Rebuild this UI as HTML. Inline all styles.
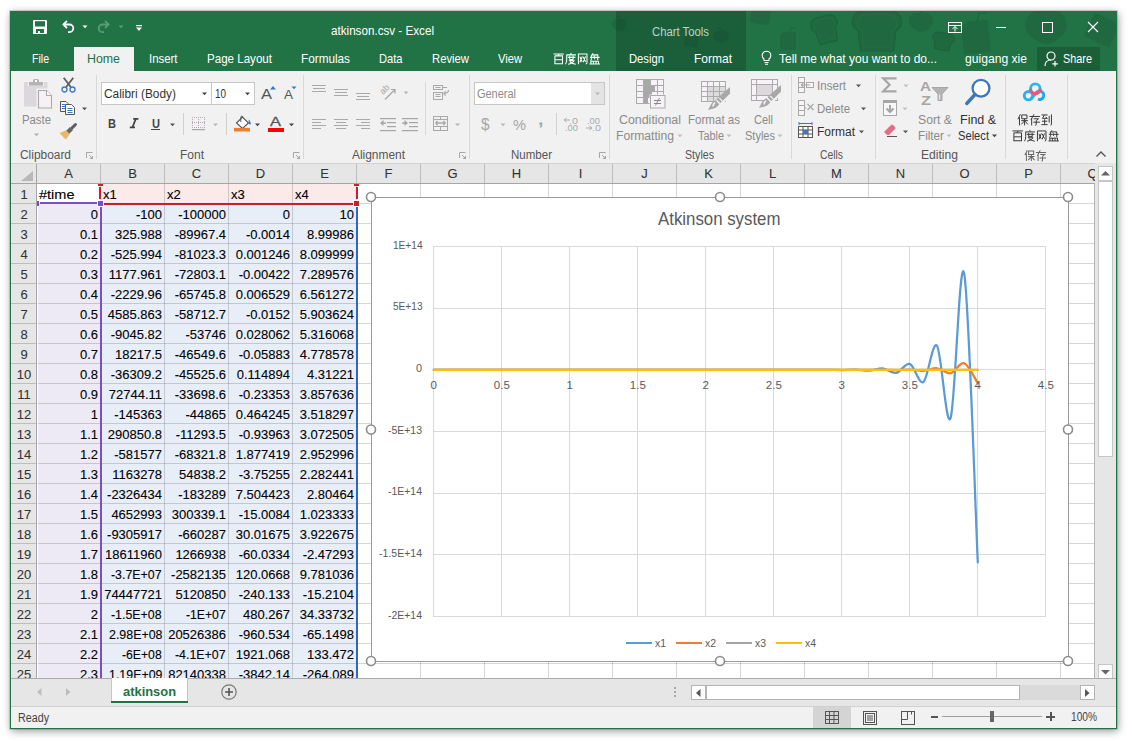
<!DOCTYPE html><html><head><meta charset="utf-8"><style>
html,body{margin:0;padding:0;}
body{width:1132px;height:744px;position:relative;overflow:hidden;background:#fff;font-family:"Liberation Sans",sans-serif;}
div{box-sizing:border-box;}
svg{overflow:visible}
</style></head><body>
<div style="position:absolute;left:10px;top:11px;width:1107px;height:718px;background:#f1f1f1;box-shadow:0 0 0 1px rgba(0,0,0,0.13),1px 2px 8px rgba(0,0,0,0.42);"></div>
<div style="position:absolute;left:10px;top:11px;width:1107px;height:60px;background:#217346;"></div>
<svg style="position:absolute;left:600px;top:11px;overflow:hidden" width="516" height="60" viewBox="0 0 516 60"><g fill="#1f6840"><circle cx="17.1" cy="13.0" r="5.2"/><circle cx="21.9" cy="13.0" r="5.2"/><ellipse cx="19.5" cy="14.8" rx="5.6" ry="5.2"/><path d="M19.5 8.8 q0.7 -3.5 -3.5 -4.2" stroke="#1f6840" stroke-width="1.8" fill="none"/></g><rect x="84" y="24" width="14" height="12" fill="#1f6840" transform="rotate(10 91 30)"/><g fill="#1f6840"><circle cx="118.5" cy="25.0" r="5.2"/><circle cx="123.5" cy="25.0" r="5.2"/><ellipse cx="121.0" cy="26.8" rx="5.6" ry="5.2"/><path d="M121.0 20.8 q0.7 -3.5 -3.5 -4.2" stroke="#1f6840" stroke-width="1.8" fill="none"/></g><rect x="151" y="-2" width="19" height="15" rx="3" fill="#1f6840" transform="rotate(8 160 5)"/><g transform="translate(180 17) rotate(0 8.0 11.0)" fill="#1f6840"><path d="M0 6.6l4.0 -2.6h12.0v18.0h-16.0z"/><path d="M9.6 4.4l1.6 -4.4h4.8" stroke="#1f6840" stroke-width="1.5" fill="none"/></g><g transform="translate(212 5) rotate(-15 13.5 13.5)"><path d="M4.6 27.0 L3.2 13.5 C-2.2 10.8 -0.5 0 8.1 0 L18.9 0 C27.5 0 29.2 10.8 23.8 13.5 L22.4 27.0 Z" fill="#1f6840" stroke="#1d633c" stroke-width="1.2"/><path d="M4.6 27.0 L3.2 13.5 C-2.2 10.8 -0.5 0 8.1 0 L18.9 0 C27.5 0 29.2 10.8 23.8 13.5 L22.4 27.0 Z" fill="none" stroke="#226f44" stroke-width="1.5" transform="translate(2.7 2.7) scale(0.8)"/></g><g transform="translate(252 -1) rotate(0 25.0 20.5)"><path d="M8.5 41.0 L6.0 20.5 C-4.0 16.4 -1.0 0 15.0 0 L35.0 0 C51.0 0 54.0 16.4 44.0 20.5 L41.5 41.0 Z" fill="#1f6840" stroke="#1d633c" stroke-width="1.2"/><path d="M8.5 41.0 L6.0 20.5 C-4.0 16.4 -1.0 0 15.0 0 L35.0 0 C51.0 0 54.0 16.4 44.0 20.5 L41.5 41.0 Z" fill="none" stroke="#226f44" stroke-width="1.5" transform="translate(5.0 4.1) scale(0.8)"/></g><g fill="#1f6840"><circle cx="317.1" cy="10.0" r="8.2"/><circle cx="324.9" cy="10.0" r="8.2"/><ellipse cx="321.0" cy="12.8" rx="8.8" ry="8.2"/><path d="M321.0 3.4 q1.1 -5.5 -5.5 -6.6" stroke="#1f6840" stroke-width="2.8" fill="none"/></g><g transform="translate(332 22) rotate(10 11.0 8.5)"><path d="M3.7 17.0 L2.6 8.5 C-1.8 6.8 -0.4 0 6.6 0 L15.4 0 C22.4 0 23.8 6.8 19.4 8.5 L18.3 17.0 Z" fill="#1f6840" stroke="#1d633c" stroke-width="1.2"/></g><g transform="translate(362 3) rotate(-6 13.5 19.5)" fill="#1f6840"><path d="M0 11.7l6.8 -4.7h20.2v32.0h-27.0z"/><path d="M16.2 7.8l2.7 -7.8h8.1" stroke="#1f6840" stroke-width="1.5" fill="none"/></g><g fill="#1f6840"><circle cx="439.4" cy="14.0" r="14.2"/><circle cx="452.6" cy="14.0" r="14.2"/><ellipse cx="446.0" cy="18.8" rx="15.2" ry="14.2"/><path d="M446.0 2.6 q1.9 -9.5 -9.5 -11.4" stroke="#1f6840" stroke-width="4.8" fill="none"/></g><rect x="488" y="6" width="28" height="26" fill="#1f6840" transform="rotate(25 502 19)"/></svg>
<div style="position:absolute;left:616px;top:11px;width:130px;height:60px;background:rgba(15,60,35,0.36);"></div>
<svg style="position:absolute;left:33px;top:20px;" width="14" height="14" viewBox="0 0 14 14"><rect x="0" y="0" width="14" height="14" rx="0.8" fill="#fff"/>
      <rect x="2" y="1.2" width="10" height="5.3" fill="#217346"/><rect x="3" y="9" width="8" height="4" fill="#217346"/>
      <rect x="5" y="11" width="2" height="2" fill="#fff"/></svg>
<svg style="position:absolute;left:60px;top:19px;" width="16" height="16" viewBox="0 0 16 16"><path d="M7 1.8l-3.6 3.7 3.6 3.7" fill="none" stroke="#fff" stroke-width="1.8"/><path d="M3.5 5.5h6a3.8 3.8 0 0 1 0 7.6h-1.5" fill="none" stroke="#fff" stroke-width="1.8"/></svg>
<svg style="position:absolute;left:82px;top:25px;" width="6" height="4" viewBox="0 0 6 4"><path d="M0.5 0.5h5l-2.5 2.8z" fill="#fff"/></svg>
<svg style="position:absolute;left:96px;top:19px;" width="16" height="16" viewBox="0 0 16 16"><path d="M9 1.8l3.6 3.7-3.6 3.7" fill="none" stroke="#5d9c78" stroke-width="1.8"/><path d="M12.5 5.5h-6a3.8 3.8 0 0 0 0 7.6h1.5" fill="none" stroke="#5d9c78" stroke-width="1.8"/></svg>
<svg style="position:absolute;left:118px;top:25px;" width="6" height="4" viewBox="0 0 6 4"><path d="M0.5 0.5h5l-2.5 2.8z" fill="#5d9c78"/></svg>
<svg style="position:absolute;left:136px;top:25px;" width="6" height="7" viewBox="0 0 6 7"><rect x="0" y="0" width="6" height="1.2" fill="#fff"/><path d="M0 2.5h6l-3 3.5z" fill="#fff"/></svg>
<div style="position:absolute;left:331.00px;top:23.03px;font-size:13px;line-height:normal;white-space:nowrap;color:#fff;transform:scaleX(0.8966);transform-origin:0 0;">atkinson.csv - Excel</div>
<div style="position:absolute;left:652.00px;top:24.64px;font-size:12px;line-height:normal;white-space:nowrap;color:#bcd6c4;transform:scaleX(0.9425);transform-origin:0 0;">Chart Tools</div>
<svg style="position:absolute;left:948px;top:22px;" width="14" height="11" viewBox="0 0 14 11"><g fill="none" stroke="#fff" stroke-width="1"><rect x="0.5" y="0.5" width="13" height="10"/><path d="M0.5 3.5h13M7 9.5v-5M4.5 7l2.5-2.5 2.5 2.5"/></g></svg>
<svg style="position:absolute;left:996px;top:27px;" width="11" height="2" viewBox="0 0 11 2"><rect x="0" y="0" width="10" height="1" fill="#fff"/></svg>
<svg style="position:absolute;left:1042px;top:22px;" width="11" height="11" viewBox="0 0 11 11"><rect x="0.5" y="0.5" width="10" height="10" fill="none" stroke="#fff" stroke-width="1"/></svg>
<svg style="position:absolute;left:1088px;top:22px;" width="10" height="10" viewBox="0 0 10 10"><path d="M0 0l10 10M10 0l-10 10" stroke="#fff" stroke-width="1.1"/></svg>
<div style="position:absolute;left:74px;top:47px;width:60px;height:24px;background:#f1f1f1;"></div>
<div style="position:absolute;left:32.00px;top:51.23px;font-size:13px;line-height:normal;white-space:nowrap;color:#fff;transform:scaleX(0.8115);transform-origin:0 0;">File</div>
<div style="position:absolute;left:87.00px;top:51.23px;font-size:13px;line-height:normal;white-space:nowrap;color:#217346;transform:scaleX(0.9516);transform-origin:0 0;">Home</div>
<div style="position:absolute;left:149.00px;top:51.23px;font-size:13px;line-height:normal;white-space:nowrap;color:#fff;transform:scaleX(0.8766);transform-origin:0 0;">Insert</div>
<div style="position:absolute;left:207.00px;top:51.23px;font-size:13px;line-height:normal;white-space:nowrap;color:#fff;transform:scaleX(0.8903);transform-origin:0 0;">Page Layout</div>
<div style="position:absolute;left:301.00px;top:51.23px;font-size:13px;line-height:normal;white-space:nowrap;color:#fff;transform:scaleX(0.9044);transform-origin:0 0;">Formulas</div>
<div style="position:absolute;left:379.00px;top:51.23px;font-size:13px;line-height:normal;white-space:nowrap;color:#fff;transform:scaleX(0.8558);transform-origin:0 0;">Data</div>
<div style="position:absolute;left:432.00px;top:51.23px;font-size:13px;line-height:normal;white-space:nowrap;color:#fff;transform:scaleX(0.8680);transform-origin:0 0;">Review</div>
<div style="position:absolute;left:498.00px;top:51.23px;font-size:13px;line-height:normal;white-space:nowrap;color:#fff;transform:scaleX(0.8589);transform-origin:0 0;">View</div>
<div style="position:absolute;left:629.00px;top:51.23px;font-size:13px;line-height:normal;white-space:nowrap;color:#fff;transform:scaleX(0.8649);transform-origin:0 0;">Design</div>
<div style="position:absolute;left:694.00px;top:51.23px;font-size:13px;line-height:normal;white-space:nowrap;color:#fff;transform:scaleX(0.9229);transform-origin:0 0;">Format</div>
<svg style="position:absolute;left:762px;top:51px;" width="9" height="14" viewBox="0 0 9 14"><g fill="none" stroke="#fff" stroke-width="1.1"><path d="M2 9.5v-1.5c-1.3-1-1.8-2.3-1.8-3.5a4.3 4.3 0 0 1 8.6 0c0 1.2-.5 2.5-1.8 3.5v1.5z"/><path d="M2.5 11.5h4M3 13.3h3"/></g></svg>
<div style="position:absolute;left:779.00px;top:51.23px;font-size:13px;line-height:normal;white-space:nowrap;color:#fff;transform:scaleX(0.9226);transform-origin:0 0;">Tell me what you want to do...</div>
<div style="position:absolute;left:965.00px;top:51.23px;font-size:13px;line-height:normal;white-space:nowrap;color:#fff;transform:scaleX(0.9323);transform-origin:0 0;">guigang xie</div>
<div style="position:absolute;left:1037px;top:47px;width:63px;height:24px;background:#1b5e37;"></div>
<svg style="position:absolute;left:1044px;top:51px;" width="16" height="16" viewBox="0 0 16 16"><g fill="none" stroke="#fff" stroke-width="1.2"><circle cx="7" cy="5" r="4"/><path d="M1 15c0-4 2.5-6 6-6"/><path d="M11 10v5.5M8.3 12.8h5.5"/></g></svg>
<div style="position:absolute;left:1063.00px;top:51.23px;font-size:13px;line-height:normal;white-space:nowrap;color:#fff;transform:scaleX(0.8359);transform-origin:0 0;">Share</div>
<div style="position:absolute;left:11px;top:163px;width:1105px;height:1px;background:#d2d2d2;"></div>
<div style="position:absolute;left:96px;top:75px;width:1px;height:84px;background:#d8d8d8;"></div>
<div style="position:absolute;left:303px;top:75px;width:1px;height:84px;background:#d8d8d8;"></div>
<div style="position:absolute;left:469px;top:75px;width:1px;height:84px;background:#d8d8d8;"></div>
<div style="position:absolute;left:609px;top:75px;width:1px;height:84px;background:#d8d8d8;"></div>
<div style="position:absolute;left:791px;top:75px;width:1px;height:84px;background:#d8d8d8;"></div>
<div style="position:absolute;left:875px;top:75px;width:1px;height:84px;background:#d8d8d8;"></div>
<div style="position:absolute;left:1005px;top:75px;width:1px;height:84px;background:#d8d8d8;"></div>
<div style="position:absolute;left:1067px;top:75px;width:1px;height:84px;background:#d8d8d8;"></div>
<div style="position:absolute;left:20.00px;top:148.14px;font-size:12px;line-height:normal;white-space:nowrap;color:#555;transform:scaleX(0.9929);transform-origin:0 0;">Clipboard</div>
<div style="position:absolute;left:180.00px;top:148.14px;font-size:12px;line-height:normal;white-space:nowrap;color:#555;">Font</div>
<div style="position:absolute;left:352.00px;top:148.14px;font-size:12px;line-height:normal;white-space:nowrap;color:#555;transform:scaleX(0.9932);transform-origin:0 0;">Alignment</div>
<div style="position:absolute;left:511.00px;top:148.14px;font-size:12px;line-height:normal;white-space:nowrap;color:#555;transform:scaleX(0.9606);transform-origin:0 0;">Number</div>
<div style="position:absolute;left:685.00px;top:148.14px;font-size:12px;line-height:normal;white-space:nowrap;color:#555;transform:scaleX(0.8874);transform-origin:0 0;">Styles</div>
<div style="position:absolute;left:820.00px;top:148.14px;font-size:12px;line-height:normal;white-space:nowrap;color:#555;transform:scaleX(0.8623);transform-origin:0 0;">Cells</div>
<div style="position:absolute;left:921.00px;top:148.14px;font-size:12px;line-height:normal;white-space:nowrap;color:#555;transform:scaleX(1.0084);transform-origin:0 0;">Editing</div>
<svg style="position:absolute;left:85.5px;top:152px;" width="8" height="8" viewBox="0 0 8 8"><path d="M0.5 6v-5.5h6" fill="none" stroke="#a6a6a6" stroke-width="1"/><path d="M3 3l3 3" stroke="#a6a6a6" stroke-width="1"/><path d="M7 3.5v3.5h-3.5z" fill="#a6a6a6"/></svg>
<svg style="position:absolute;left:292.5px;top:152px;" width="8" height="8" viewBox="0 0 8 8"><path d="M0.5 6v-5.5h6" fill="none" stroke="#a6a6a6" stroke-width="1"/><path d="M3 3l3 3" stroke="#a6a6a6" stroke-width="1"/><path d="M7 3.5v3.5h-3.5z" fill="#a6a6a6"/></svg>
<svg style="position:absolute;left:458.5px;top:152px;" width="8" height="8" viewBox="0 0 8 8"><path d="M0.5 6v-5.5h6" fill="none" stroke="#a6a6a6" stroke-width="1"/><path d="M3 3l3 3" stroke="#a6a6a6" stroke-width="1"/><path d="M7 3.5v3.5h-3.5z" fill="#a6a6a6"/></svg>
<svg style="position:absolute;left:598.5px;top:152px;" width="8" height="8" viewBox="0 0 8 8"><path d="M0.5 6v-5.5h6" fill="none" stroke="#a6a6a6" stroke-width="1"/><path d="M3 3l3 3" stroke="#a6a6a6" stroke-width="1"/><path d="M7 3.5v3.5h-3.5z" fill="#a6a6a6"/></svg>
<svg style="position:absolute;left:22px;top:77px;" width="32" height="34" viewBox="0 0 32 34"><rect x="2" y="5" width="23.5" height="24.5" rx="1" fill="#dbd7db"/>
      <rect x="6" y="4.5" width="16" height="4.5" fill="#f1f1f1"/>
      <rect x="7" y="5" width="14" height="3.6" fill="#b4b4b4"/>
      <rect x="11" y="2" width="6" height="4" rx="1.5" fill="#b4b4b4"/><rect x="13" y="3" width="2" height="2" fill="#fff"/>
      <path d="M15.5 12.5h9.5l5.5 5.5v13.5h-15z" fill="#f1f1f1" stroke="#f1f1f1" stroke-width="2"/>
      <path d="M16.5 13.5h8l5 5v12.5h-13z" fill="#f5f1f5" stroke="#aaaaaa" stroke-width="1.1"/>
      <path d="M24.5 13.5v5h5" fill="#fff" stroke="#aaaaaa" stroke-width="1.1"/></svg>
<div style="position:absolute;left:22.00px;top:113.14px;font-size:12px;line-height:normal;white-space:nowrap;color:#8a8a8a;transform:scaleX(0.9450);transform-origin:0 0;">Paste</div>
<svg style="position:absolute;left:33px;top:133px;" width="7" height="4" viewBox="0 0 7 4"><path d="M1 0.5h5l-2.5 2.8z" fill="#b0b0b0"/></svg>
<svg style="position:absolute;left:61px;top:77px;" width="15" height="16" viewBox="0 0 15 16"><path d="M5.2 10L12.3 0.8M9.8 10L2.7 0.8" stroke="#5d5d5d" stroke-width="1.8" fill="none"/>
      <g fill="none" stroke="#3b78c2" stroke-width="1.3"><circle cx="3.5" cy="12.5" r="2.5"/><circle cx="11.5" cy="12.5" r="2.5"/></g></svg>
<svg style="position:absolute;left:60px;top:101px;" width="15" height="14" viewBox="0 0 15 14"><path d="M0.5 0.5h5.5l2 2v8h-7.5z" fill="#f4f4f4" stroke="#555" stroke-width="1"/>
      <path d="M2 3.5h3M2 5.5h3M2 7.5h3" stroke="#3b78c2" stroke-width="1"/>
      <path d="M5.5 3.5h6l3 3v7h-9z" fill="#fff" stroke="#555" stroke-width="1"/>
      <path d="M7.5 7.5h5M7.5 9.5h5M7.5 11.5h5" stroke="#3b78c2" stroke-width="1"/></svg>
<svg style="position:absolute;left:81px;top:107px;" width="7" height="4" viewBox="0 0 7 4"><path d="M1 0.5h5l-2.5 2.8z" fill="#555"/></svg>
<svg style="position:absolute;left:59px;top:123px;" width="18" height="18" viewBox="0 0 18 18"><path d="M16.5 1.5L13 5" stroke="#5d5d5d" stroke-width="3" stroke-linecap="round"/>
      <path d="M12.5 5.5L8.5 9.5" stroke="#666" stroke-width="4.4"/>
      <path d="M7 7.2L10.8 11L6.8 16.5L0.5 10.2Z" fill="#e8b86a"/></svg>
<div style="position:absolute;left:101px;top:82px;width:111px;height:23px;background:#fff;border:1px solid #c6c6c6;"></div>
<div style="position:absolute;left:211px;top:82px;width:44px;height:23px;background:#fff;border:1px solid #c6c6c6;"></div>
<div style="position:absolute;left:104.00px;top:86.69px;font-size:12.5px;line-height:normal;white-space:nowrap;color:#333;transform:scaleX(0.9509);transform-origin:0 0;">Calibri (Body)</div>
<div style="position:absolute;left:215.00px;top:86.69px;font-size:12.5px;line-height:normal;white-space:nowrap;color:#333;transform:scaleX(0.7911);transform-origin:0 0;">10</div>
<svg style="position:absolute;left:201px;top:92px;" width="7" height="4" viewBox="0 0 7 4"><path d="M1 0.5h5l-2.5 2.8z" fill="#444"/></svg>
<svg style="position:absolute;left:244px;top:92px;" width="7" height="4" viewBox="0 0 7 4"><path d="M1 0.5h5l-2.5 2.8z" fill="#444"/></svg>
<div style="position:absolute;left:261.00px;top:85.42px;font-size:15px;line-height:normal;white-space:nowrap;color:#555;transform:scaleX(1.0994);transform-origin:0 0;">A</div>
<svg style="position:absolute;left:270px;top:86px;" width="6" height="4" viewBox="0 0 6 4"><path d="M0 3.5l3-3.5 3 3.5z" fill="#3b78c2"/></svg>
<div style="position:absolute;left:284.00px;top:88.14px;font-size:12px;line-height:normal;white-space:nowrap;color:#555;transform:scaleX(1.1244);transform-origin:0 0;">A</div>
<svg style="position:absolute;left:291px;top:86px;" width="6" height="4" viewBox="0 0 6 4"><path d="M0.5 0.5h5l-2.5 2.8z" fill="#3b78c2"/></svg>
<div style="position:absolute;left:107.50px;top:116.23px;font-size:13px;line-height:normal;white-space:nowrap;color:#444;font-weight:bold;transform:scaleX(0.8521);transform-origin:0 0;">B</div>
<svg style="position:absolute;left:128.5px;top:118px;" width="10" height="11" viewBox="0 0 10 11"><path d="M4.2 0.9h5.2M0.8 9.4h5.2M6.8 0.9l-3.4 8.5" stroke="#444" stroke-width="1.7" fill="none"/></svg>
<div style="position:absolute;left:151.50px;top:116.99px;font-size:12.5px;line-height:normal;white-space:nowrap;color:#444;font-weight:bold;transform:scaleX(0.8862);transform-origin:0 0;">U</div>
<div style="position:absolute;left:151px;top:129px;width:9px;height:1.4px;background:#444;"></div>
<svg style="position:absolute;left:169px;top:123px;" width="7" height="4" viewBox="0 0 7 4"><path d="M1 0.5h5l-2.5 2.8z" fill="#555"/></svg>
<div style="position:absolute;left:183px;top:113px;width:1px;height:22px;background:#d0d0d0;"></div>
<svg style="position:absolute;left:192px;top:117px;" width="14" height="14" viewBox="0 0 14 14"><rect x="0" y="0" width="1" height="1" fill="#b9a9b9"/><rect x="0" y="5" width="1" height="1" fill="#b9a9b9"/><rect x="0" y="10" width="1" height="1" fill="#b9a9b9"/><rect x="2" y="0" width="1" height="1" fill="#b9a9b9"/><rect x="2" y="5" width="1" height="1" fill="#b9a9b9"/><rect x="2" y="10" width="1" height="1" fill="#b9a9b9"/><rect x="4" y="0" width="1" height="1" fill="#b9a9b9"/><rect x="4" y="5" width="1" height="1" fill="#b9a9b9"/><rect x="4" y="10" width="1" height="1" fill="#b9a9b9"/><rect x="6" y="0" width="1" height="1" fill="#b9a9b9"/><rect x="6" y="5" width="1" height="1" fill="#b9a9b9"/><rect x="6" y="10" width="1" height="1" fill="#b9a9b9"/><rect x="8" y="0" width="1" height="1" fill="#b9a9b9"/><rect x="8" y="5" width="1" height="1" fill="#b9a9b9"/><rect x="8" y="10" width="1" height="1" fill="#b9a9b9"/><rect x="10" y="0" width="1" height="1" fill="#b9a9b9"/><rect x="10" y="5" width="1" height="1" fill="#b9a9b9"/><rect x="10" y="10" width="1" height="1" fill="#b9a9b9"/><rect x="12" y="0" width="1" height="1" fill="#b9a9b9"/><rect x="12" y="5" width="1" height="1" fill="#b9a9b9"/><rect x="12" y="10" width="1" height="1" fill="#b9a9b9"/><rect x="0" y="2" width="1" height="1" fill="#b9a9b9"/><rect x="0" y="4" width="1" height="1" fill="#b9a9b9"/><rect x="0" y="6" width="1" height="1" fill="#b9a9b9"/><rect x="0" y="8" width="1" height="1" fill="#b9a9b9"/><rect x="6" y="2" width="1" height="1" fill="#b9a9b9"/><rect x="6" y="4" width="1" height="1" fill="#b9a9b9"/><rect x="6" y="6" width="1" height="1" fill="#b9a9b9"/><rect x="6" y="8" width="1" height="1" fill="#b9a9b9"/><rect x="12" y="2" width="1" height="1" fill="#b9a9b9"/><rect x="12" y="4" width="1" height="1" fill="#b9a9b9"/><rect x="12" y="6" width="1" height="1" fill="#b9a9b9"/><rect x="12" y="8" width="1" height="1" fill="#b9a9b9"/><rect x="0" y="12" width="13" height="1.2" fill="#a6a6a6"/></svg>
<svg style="position:absolute;left:212px;top:123px;" width="7" height="4" viewBox="0 0 7 4"><path d="M1 0.5h5l-2.5 2.8z" fill="#b8b8b8"/></svg>
<div style="position:absolute;left:226px;top:113px;width:1px;height:22px;background:#d0d0d0;"></div>
<svg style="position:absolute;left:234px;top:114px;" width="18" height="18" viewBox="0 0 18 18"><path d="M2.5 9l6-6 6 6-6 5.5z" fill="#fff" stroke="#555" stroke-width="1.1"/>
      <path d="M6.8 8V3.2a1 1 0 0 1 2 0" fill="none" stroke="#555" stroke-width="1"/>
      <path d="M14.5 5.5c1.6 1 2.6 3 2.2 5.2l-1.7 -0.6z" fill="#3b78c2"/>
      <rect x="0" y="13.9" width="16" height="3.6" fill="#ed7d31"/></svg>
<svg style="position:absolute;left:254px;top:123px;" width="7" height="4" viewBox="0 0 7 4"><path d="M1 0.5h5l-2.5 2.8z" fill="#444"/></svg>
<div style="position:absolute;left:270.00px;top:114.38px;font-size:13.5px;line-height:normal;white-space:nowrap;color:#555;transform:scaleX(1.2216);transform-origin:0 0;-webkit-text-stroke:0.3px #555;">A</div>
<div style="position:absolute;left:268px;top:128px;width:16px;height:4px;background:#ff0000;"></div>
<svg style="position:absolute;left:288px;top:123px;" width="7" height="4" viewBox="0 0 7 4"><path d="M1 0.5h5l-2.5 2.8z" fill="#444"/></svg>
<svg style="position:absolute;left:312px;top:85px;" width="16" height="12" viewBox="0 0 16 12"><rect x="0" y="0" width="14" height="1" fill="#a9a9a9"/><rect x="1" y="3" width="12" height="1" fill="#a9a9a9"/><rect x="0" y="6" width="14" height="1" fill="#a9a9a9"/></svg>
<svg style="position:absolute;left:334px;top:89px;" width="16" height="12" viewBox="0 0 16 12"><rect x="0" y="0" width="14" height="1" fill="#a9a9a9"/><rect x="1" y="3" width="12" height="1" fill="#a9a9a9"/><rect x="0" y="6" width="14" height="1" fill="#a9a9a9"/></svg>
<svg style="position:absolute;left:356px;top:93px;" width="16" height="12" viewBox="0 0 16 12"><rect x="0" y="0" width="14" height="1" fill="#a9a9a9"/><rect x="1" y="3" width="12" height="1" fill="#a9a9a9"/><rect x="0" y="6" width="14" height="1" fill="#a9a9a9"/></svg>
<svg style="position:absolute;left:380px;top:84px;" width="17" height="17" viewBox="0 0 17 17"><text x="0" y="0" font-size="9" font-family="Liberation Sans" fill="#a6a6a6" transform="translate(3 11) rotate(-45)">ab</text><g fill="none" stroke="#a6a6a6" stroke-width="1.2"><path d="M5 15.5l10-10M11 5.5h4v4"/></g></svg>
<svg style="position:absolute;left:403px;top:91px;" width="6" height="4" viewBox="0 0 6 4"><path d="M0.5 0.5h5l-2.5 2.8z" fill="#b8b8b8"/></svg>
<svg style="position:absolute;left:312px;top:119px;" width="16" height="12" viewBox="0 0 16 12"><rect x="0" y="0" width="14" height="1" fill="#a9a9a9"/><rect x="0" y="3" width="9" height="1" fill="#a9a9a9"/><rect x="0" y="6" width="14" height="1" fill="#a9a9a9"/><rect x="0" y="9" width="9" height="1" fill="#a9a9a9"/></svg>
<svg style="position:absolute;left:334px;top:119px;" width="16" height="12" viewBox="0 0 16 12"><rect x="0" y="0" width="14" height="1" fill="#a9a9a9"/><rect x="2" y="3" width="10" height="1" fill="#a9a9a9"/><rect x="0" y="6" width="14" height="1" fill="#a9a9a9"/><rect x="2" y="9" width="10" height="1" fill="#a9a9a9"/></svg>
<svg style="position:absolute;left:356px;top:119px;" width="16" height="12" viewBox="0 0 16 12"><rect x="0" y="0" width="14" height="1" fill="#a9a9a9"/><rect x="5" y="3" width="9" height="1" fill="#a9a9a9"/><rect x="0" y="6" width="14" height="1" fill="#a9a9a9"/><rect x="5" y="9" width="9" height="1" fill="#a9a9a9"/></svg>
<svg style="position:absolute;left:380px;top:118px;" width="17" height="13" viewBox="0 0 17 13"><g fill="#a6a6a6"><rect x="0" y="0" width="16" height="1.2"/><rect x="7" y="4" width="9" height="1.2"/><rect x="7" y="8" width="9" height="1.2"/><rect x="0" y="12" width="16" height="1.2"/><path d="M0 5l3.5-3v6z"/><rect x="3" y="4.4" width="3" height="1.4"/></g></svg>
<svg style="position:absolute;left:402px;top:118px;" width="17" height="13" viewBox="0 0 17 13"><g fill="#a6a6a6"><rect x="0" y="0" width="16" height="1.2"/><rect x="7" y="4" width="9" height="1.2"/><rect x="7" y="8" width="9" height="1.2"/><rect x="0" y="12" width="16" height="1.2"/><path d="M6 5l-3.5-3v6z"/><rect x="0" y="4.4" width="3" height="1.4"/></g></svg>
<div style="position:absolute;left:425px;top:82px;width:1px;height:53px;background:#d8d8d8;"></div>
<svg style="position:absolute;left:432px;top:84px;" width="18" height="17" viewBox="0 0 18 17"><g fill="none" stroke="#a9a9a9" stroke-width="1"><rect x="1.5" y="1.5" width="9" height="4"/><path d="M10.5 3.5h4.5M3.5 3.5h5"/><rect x="1.5" y="8.5" width="9" height="7"/><path d="M3.5 10.5h5M3.5 12.5h5"/></g><path d="M16.5 6c0 2.5-1.5 3.5-5 3.5M11.5 9.5l2.2-2.2M11.5 9.5l2.2 2.2" stroke="#a9a9a9" stroke-width="1.2" fill="none"/></svg>
<svg style="position:absolute;left:432px;top:115px;" width="18" height="17" viewBox="0 0 18 17"><g fill="none" stroke="#a9a9a9" stroke-width="1"><rect x="1.5" y="1.5" width="14" height="14"/><path d="M1.5 4.5h14M1.5 11.5h14M8.5 1.5v3M8.5 11.5v4"/></g><path d="M3.5 8h10M3.5 8l2.2-2M3.5 8l2.2 2M13.5 8l-2.2-2M13.5 8l-2.2 2" stroke="#a9a9a9" stroke-width="1.3" fill="none"/></svg>
<svg style="position:absolute;left:454px;top:123px;" width="7" height="4" viewBox="0 0 7 4"><path d="M1 0.5h5l-2.5 2.8z" fill="#b8b8b8"/></svg>
<div style="position:absolute;left:474px;top:82px;width:131px;height:23px;background:#fff;border:1px solid #c6c6c6;"></div>
<div style="position:absolute;left:591px;top:83px;width:13px;height:21px;background:#e4e4e4;"></div>
<div style="position:absolute;left:477.00px;top:86.69px;font-size:12.5px;line-height:normal;white-space:nowrap;color:#8a8a8a;transform:scaleX(0.8770);transform-origin:0 0;">General</div>
<svg style="position:absolute;left:594px;top:92px;" width="7" height="4" viewBox="0 0 7 4"><path d="M1 0.5h5l-2.5 2.8z" fill="#b8b8b8"/></svg>
<div style="position:absolute;left:481.00px;top:115.52px;font-size:16px;line-height:normal;white-space:nowrap;color:#a6a6a6;transform:scaleX(0.9552);transform-origin:0 0;">$</div>
<svg style="position:absolute;left:500px;top:123px;" width="6" height="4" viewBox="0 0 6 4"><path d="M0.5 0.5h5l-2.5 2.8z" fill="#b8b8b8"/></svg>
<div style="position:absolute;left:513.00px;top:115.97px;font-size:15.5px;line-height:normal;white-space:nowrap;color:#a6a6a6;transform:scaleX(0.9433);transform-origin:0 0;">%</div>
<div style="position:absolute;left:537.50px;top:109.61px;font-size:17px;line-height:normal;white-space:nowrap;color:#a6a6a6;font-weight:bold;transform:scaleX(1.1646);transform-origin:0 0;">,</div>
<div style="position:absolute;left:556px;top:113px;width:1px;height:22px;background:#d0d0d0;"></div>
<div style="position:absolute;left:569.00px;top:115.86px;font-size:9px;line-height:normal;white-space:nowrap;color:#aaa;transform:scaleX(1.1991);transform-origin:0 0;">.0</div>
<div style="position:absolute;left:565.00px;top:122.86px;font-size:9px;line-height:normal;white-space:nowrap;color:#aaa;transform:scaleX(1.0391);transform-origin:0 0;">.00</div>
<svg style="position:absolute;left:564px;top:118px;" width="6" height="4" viewBox="0 0 6 4"><path d="M0 2h6M0 2l2.5-2M0 2l2.5 2" stroke="#aaa" stroke-width="1" fill="none"/></svg>
<div style="position:absolute;left:587.00px;top:115.86px;font-size:9px;line-height:normal;white-space:nowrap;color:#aaa;transform:scaleX(1.0391);transform-origin:0 0;">.00</div>
<div style="position:absolute;left:592.00px;top:122.86px;font-size:9px;line-height:normal;white-space:nowrap;color:#aaa;transform:scaleX(1.1991);transform-origin:0 0;">.0</div>
<svg style="position:absolute;left:586px;top:126px;" width="6" height="4" viewBox="0 0 6 4"><path d="M0 2h6M6 2l-2.5-2M6 2l-2.5 2" stroke="#aaa" stroke-width="1" fill="none"/></svg>
<svg style="position:absolute;left:630px;top:74px;" width="40" height="40" viewBox="0 0 40 40"><rect x="6.5" y="5.5" width="27" height="24" fill="#f7f2f7" stroke="#ababab"/>
      <path d="M13.5 5.5v24M20.5 5.5v24M27.5 5.5v24M6.5 11.5h27M6.5 17.5h27M6.5 23.5h27" stroke="#ababab"/>
      <rect x="14" y="6" width="6" height="5" fill="#a8a8a8"/><rect x="14" y="12" width="11" height="5" fill="#a8a8a8"/>
      <rect x="14" y="18" width="8" height="5" fill="#a8a8a8"/><rect x="14" y="24" width="4" height="5" fill="#a8a8a8"/>
      <rect x="19.5" y="20.5" width="16" height="14" fill="#f1f1f1"/>
      <rect x="20.5" y="21.5" width="14.5" height="12.5" fill="#f7f2f7" stroke="#ababab"/>
      <path d="M24 26.5h7M24 29.5h7M29.5 24l-4 7.5" stroke="#888" stroke-width="1"/></svg>
<svg style="position:absolute;left:700px;top:80px;" width="32" height="32" viewBox="0 0 32 32"><rect x="1.5" y="1.5" width="24" height="20" fill="#f7f2f7" stroke="#ababab"/>
      <rect x="8" y="7" width="17" height="14" fill="#dcdcdc"/>
      <path d="M7.5 1.5v20M13.5 1.5v20M19.5 1.5v20M1.5 6.5h24M1.5 11.5h24M1.5 16.5h24" stroke="#ababab"/>
      <path d="M12 26 L30 7 L32 14 L20 27 Z" fill="#f1f1f1"/>
      <g transform="translate(11.8 7) scale(1.3)"><path d="M14 0 L14 5 L8.5 10.5 L5.5 7.5 Z" fill="#a8a8a8"/><path d="M7.8 11.2 L4.8 8.2 L3.6 9.4 L6.6 12.4Z" fill="#a8a8a8"/><path d="M5.8 13.2 C4 15.5 2 17 -3 17.5 C-1 15 -1 12 2.8 10.2 Z" fill="#a8a8a8"/><path d="M2.5 12 C1.2 13 0.8 14 1.2 15" stroke="#f4f4f4" stroke-width="1.2" fill="none"/></g></svg>
<svg style="position:absolute;left:750px;top:78px;" width="32" height="32" viewBox="0 0 32 32"><rect x="1.5" y="1.5" width="26" height="21" fill="#f7f2f7" stroke="#ababab"/>
      <rect x="7" y="7" width="15" height="10" fill="#dcd8dc"/>
      <path d="M6.5 1.5v21M22.5 1.5v21M1.5 6.5h26M1.5 17.5h26" stroke="#ababab"/>
      <path d="M13 26 L31 7 L33 14 L21 27 Z" fill="#f1f1f1"/>
      <g transform="translate(12.8 7) scale(1.3)"><path d="M14 0 L14 5 L8.5 10.5 L5.5 7.5 Z" fill="#a8a8a8"/><path d="M7.8 11.2 L4.8 8.2 L3.6 9.4 L6.6 12.4Z" fill="#a8a8a8"/><path d="M5.8 13.2 C4 15.5 2 17 -3 17.5 C-1 15 -1 12 2.8 10.2 Z" fill="#a8a8a8"/><path d="M2.5 12 C1.2 13 0.8 14 1.2 15" stroke="#f4f4f4" stroke-width="1.2" fill="none"/></g></svg>
<div style="position:absolute;left:619.00px;top:112.69px;font-size:12.5px;line-height:normal;white-space:nowrap;color:#8a8a8a;transform:scaleX(0.9913);transform-origin:0 0;">Conditional</div>
<div style="position:absolute;left:616.00px;top:128.69px;font-size:12.5px;line-height:normal;white-space:nowrap;color:#8a8a8a;transform:scaleX(0.9708);transform-origin:0 0;">Formatting</div>
<svg style="position:absolute;left:677px;top:134px;" width="6" height="4" viewBox="0 0 6 4"><path d="M0.5 0.5h5l-2.5 2.8z" fill="#c0c0c0"/></svg>
<div style="position:absolute;left:688.00px;top:112.69px;font-size:12.5px;line-height:normal;white-space:nowrap;color:#8a8a8a;transform:scaleX(0.9242);transform-origin:0 0;">Format as</div>
<div style="position:absolute;left:698.00px;top:128.69px;font-size:12.5px;line-height:normal;white-space:nowrap;color:#8a8a8a;transform:scaleX(0.8700);transform-origin:0 0;">Table</div>
<svg style="position:absolute;left:726px;top:134px;" width="6" height="4" viewBox="0 0 6 4"><path d="M0.5 0.5h5l-2.5 2.8z" fill="#c0c0c0"/></svg>
<div style="position:absolute;left:754.00px;top:112.69px;font-size:12.5px;line-height:normal;white-space:nowrap;color:#8a8a8a;transform:scaleX(0.8823);transform-origin:0 0;">Cell</div>
<div style="position:absolute;left:745.00px;top:128.69px;font-size:12.5px;line-height:normal;white-space:nowrap;color:#8a8a8a;transform:scaleX(0.8813);transform-origin:0 0;">Styles</div>
<svg style="position:absolute;left:777px;top:134px;" width="6" height="4" viewBox="0 0 6 4"><path d="M0.5 0.5h5l-2.5 2.8z" fill="#c0c0c0"/></svg>
<svg style="position:absolute;left:798px;top:77px;" width="17" height="17" viewBox="0 0 17 17"><g fill="#f7f3f7" stroke="#a9a9a9" stroke-width="1"><rect x="0.5" y="0.5" width="6" height="5"/><rect x="0.5" y="5.5" width="6" height="5"/><rect x="0.5" y="10.5" width="6" height="5"/></g><g fill="#f7f3f7" stroke="#a9a9a9"><rect x="8.5" y="5.5" width="7" height="5"/></g><path d="M3 8h9M3 8l2.5-2.2M3 8l2.5 2.2" stroke="#a9a9a9" stroke-width="1.1" fill="none"/></svg>
<div style="position:absolute;left:817.00px;top:78.69px;font-size:12.5px;line-height:normal;white-space:nowrap;color:#8a8a8a;transform:scaleX(0.9276);transform-origin:0 0;">Insert</div>
<svg style="position:absolute;left:855px;top:84px;" width="7" height="4" viewBox="0 0 7 4"><path d="M1 0.5h5l-2.5 2.8z" fill="#555"/></svg>
<svg style="position:absolute;left:798px;top:100px;" width="17" height="17" viewBox="0 0 17 17"><g fill="#f7f3f7" stroke="#a9a9a9" stroke-width="1"><rect x="0.5" y="0.5" width="6" height="5"/><rect x="0.5" y="5.5" width="6" height="5"/><rect x="0.5" y="10.5" width="6" height="5"/></g><path d="M9.5 4l6 6M15.5 4l-6 6" stroke="#a9a9a9" stroke-width="1.2"/><path d="M6.5 8h2" stroke="#a9a9a9"/></svg>
<div style="position:absolute;left:817.00px;top:101.69px;font-size:12.5px;line-height:normal;white-space:nowrap;color:#8a8a8a;transform:scaleX(0.9133);transform-origin:0 0;">Delete</div>
<svg style="position:absolute;left:860px;top:107px;" width="7" height="4" viewBox="0 0 7 4"><path d="M1 0.5h5l-2.5 2.8z" fill="#555"/></svg>
<svg style="position:absolute;left:798px;top:122px;" width="16" height="17" viewBox="0 0 16 17"><path d="M1 1.5h13M1 0v3M14 0v3" stroke="#3b78c2" stroke-width="1"/>
      <rect x="0.5" y="4.5" width="14" height="11" fill="#fff" stroke="#555"/><path d="M0.5 8h14M0.5 12h14M5 4.5v11M10 4.5v11" stroke="#555"/>
      <rect x="5" y="8" width="5" height="4" fill="#3b78c2"/></svg>
<div style="position:absolute;left:817.00px;top:124.69px;font-size:12.5px;line-height:normal;white-space:nowrap;color:#333;transform:scaleX(0.9599);transform-origin:0 0;">Format</div>
<svg style="position:absolute;left:858px;top:130px;" width="7" height="4" viewBox="0 0 7 4"><path d="M1 0.5h5l-2.5 2.8z" fill="#555"/></svg>
<svg style="position:absolute;left:881px;top:77px;" width="17" height="17" viewBox="0 0 17 17"><path d="M15.5 1.3H2.2L8.6 7.8L2.2 14.3H15.5" fill="none" stroke="#a6a6a6" stroke-width="2.2" stroke-linejoin="miter"/></svg>
<svg style="position:absolute;left:903px;top:84px;" width="6" height="4" viewBox="0 0 6 4"><path d="M0.5 0.5h5l-2.5 2.8z" fill="#c0c0c0"/></svg>
<svg style="position:absolute;left:883px;top:100px;" width="14" height="16" viewBox="0 0 14 16"><rect x="0.5" y="0.5" width="13" height="15" fill="#f7f7f7" stroke="#a6a6a6"/><rect x="0.5" y="0.5" width="13" height="2.5" fill="#a6a6a6"/><path d="M7 5v7M3.5 8.5l3.5 3.5 3.5-3.5" fill="none" stroke="#a6a6a6" stroke-width="2"/></svg>
<svg style="position:absolute;left:902px;top:107px;" width="6" height="4" viewBox="0 0 6 4"><path d="M0.5 0.5h5l-2.5 2.8z" fill="#c0c0c0"/></svg>
<svg style="position:absolute;left:883px;top:123px;" width="15" height="14" viewBox="0 0 15 14"><path d="M1 9l7-7a1.5 1.5 0 0 1 2 0l2 2a1.5 1.5 0 0 1 0 2l-6 6h-2z" fill="#e16f86"/><path d="M4 13.5h10" stroke="#555" stroke-width="1"/></svg>
<svg style="position:absolute;left:902px;top:130px;" width="7" height="4" viewBox="0 0 7 4"><path d="M1 0.5h5l-2.5 2.8z" fill="#555"/></svg>
<div style="position:absolute;left:920.00px;top:79.28px;font-size:13.5px;line-height:normal;white-space:nowrap;color:#a6a6a6;font-weight:bold;transform:scaleX(1.1283);transform-origin:0 0;">A</div>
<div style="position:absolute;left:920.50px;top:93.28px;font-size:13.5px;line-height:normal;white-space:nowrap;color:#a6a6a6;font-weight:bold;transform:scaleX(1.2126);transform-origin:0 0;">Z</div>
<svg style="position:absolute;left:931px;top:86px;" width="18" height="16" viewBox="0 0 18 16"><path d="M1 1.5h16l-6 6.5v6.5h-4v-6.5z" fill="#b4b4b4" stroke="#a6a6a6" stroke-width="1"/><path d="M8.5 8.5v5" stroke="#e8e8e8" stroke-width="1.2"/></svg>
<div style="position:absolute;left:918.00px;top:112.69px;font-size:12.5px;line-height:normal;white-space:nowrap;color:#8a8a8a;transform:scaleX(0.9788);transform-origin:0 0;">Sort &amp;</div>
<div style="position:absolute;left:918.00px;top:128.69px;font-size:12.5px;line-height:normal;white-space:nowrap;color:#8a8a8a;transform:scaleX(0.9360);transform-origin:0 0;">Filter</div>
<svg style="position:absolute;left:946px;top:134px;" width="6" height="4" viewBox="0 0 6 4"><path d="M0.5 0.5h5l-2.5 2.8z" fill="#c0c0c0"/></svg>
<svg style="position:absolute;left:963px;top:77px;" width="30" height="30" viewBox="0 0 30 30"><circle cx="18" cy="11.2" r="8.4" fill="#fff" stroke="#3d77b8" stroke-width="2.3"/><path d="M12 17.5l-8.2 9" stroke="#3d77b8" stroke-width="3.4" stroke-linecap="round"/></svg>
<div style="position:absolute;left:960.00px;top:112.69px;font-size:12.5px;line-height:normal;white-space:nowrap;color:#333;">Find &amp;</div>
<div style="position:absolute;left:958.00px;top:128.69px;font-size:12.5px;line-height:normal;white-space:nowrap;color:#333;transform:scaleX(0.8923);transform-origin:0 0;">Select</div>
<svg style="position:absolute;left:991px;top:134px;" width="7" height="4" viewBox="0 0 7 4"><path d="M1 0.5h5l-2.5 2.8z" fill="#444"/></svg>
<svg style="position:absolute;left:1018px;top:78px;" width="34" height="28" viewBox="0 0 34 28"><g fill="none" stroke-width="2.9">
      <circle cx="10.5" cy="17.7" r="4.2" stroke="#27b2f0"/>
      <path d="M20 21.2a4.2 4.2 0 1 0 -2.5 -5" stroke="#1aa6f0"/>
      <path d="M12.5 21l6 -6" stroke="#27b2f0"/>
      <circle cx="17.3" cy="10.7" r="4.8" stroke="#2ab8f2"/>
      <path d="M12.5 10.7a4.8 4.8 0 0 0 9.6 0" stroke="#f2566e" stroke-width="3.1"/></g></svg>
<svg style="position:absolute;left:1096px;top:151px;" width="10" height="6" viewBox="0 0 10 6"><path d="M0.5 5.5l4.5-4.5 4.5 4.5" fill="none" stroke="#555" stroke-width="1.4"/></svg>
<div style="position:absolute;left:11px;top:163px;width:1084px;height:515px;background:#fff;"></div>
<div style="position:absolute;left:11px;top:164px;width:1084px;height:19px;background:#e6e6e6;"></div>
<div style="position:absolute;left:11px;top:183px;width:26px;height:495px;background:#e6e6e6;"></div>
<div style="position:absolute;left:38px;top:204px;width:63px;height:474px;background:#eeeaf5;"></div>
<div style="position:absolute;left:101px;top:183px;width:256px;height:20px;background:#fbeaea;"></div>
<div style="position:absolute;left:101px;top:203px;width:256px;height:475px;background:#e8eef8;"></div>
<svg style="position:absolute;left:11px;top:163px;overflow:hidden" width="1084" height="515" viewBox="0 0 1084 515"><rect x="89" y="20" width="1" height="495" fill="rgba(0,0,0,0.16)"/><rect x="153" y="20" width="1" height="495" fill="rgba(0,0,0,0.16)"/><rect x="217" y="20" width="1" height="495" fill="rgba(0,0,0,0.16)"/><rect x="281" y="20" width="1" height="495" fill="rgba(0,0,0,0.16)"/><rect x="345" y="20" width="1" height="495" fill="rgba(0,0,0,0.16)"/><rect x="409" y="20" width="1" height="495" fill="rgba(0,0,0,0.16)"/><rect x="473" y="20" width="1" height="495" fill="rgba(0,0,0,0.16)"/><rect x="537" y="20" width="1" height="495" fill="rgba(0,0,0,0.16)"/><rect x="601" y="20" width="1" height="495" fill="rgba(0,0,0,0.16)"/><rect x="665" y="20" width="1" height="495" fill="rgba(0,0,0,0.16)"/><rect x="729" y="20" width="1" height="495" fill="rgba(0,0,0,0.16)"/><rect x="793" y="20" width="1" height="495" fill="rgba(0,0,0,0.16)"/><rect x="857" y="20" width="1" height="495" fill="rgba(0,0,0,0.16)"/><rect x="921" y="20" width="1" height="495" fill="rgba(0,0,0,0.16)"/><rect x="985" y="20" width="1" height="495" fill="rgba(0,0,0,0.16)"/><rect x="1049" y="20" width="1" height="495" fill="rgba(0,0,0,0.16)"/><rect x="1113" y="20" width="1" height="495" fill="rgba(0,0,0,0.16)"/><rect x="27" y="40" width="1057" height="1" fill="rgba(0,0,0,0.16)"/><rect x="27" y="60" width="1057" height="1" fill="rgba(0,0,0,0.16)"/><rect x="27" y="80" width="1057" height="1" fill="rgba(0,0,0,0.16)"/><rect x="27" y="100" width="1057" height="1" fill="rgba(0,0,0,0.16)"/><rect x="27" y="120" width="1057" height="1" fill="rgba(0,0,0,0.16)"/><rect x="27" y="140" width="1057" height="1" fill="rgba(0,0,0,0.16)"/><rect x="27" y="160" width="1057" height="1" fill="rgba(0,0,0,0.16)"/><rect x="27" y="180" width="1057" height="1" fill="rgba(0,0,0,0.16)"/><rect x="27" y="200" width="1057" height="1" fill="rgba(0,0,0,0.16)"/><rect x="27" y="220" width="1057" height="1" fill="rgba(0,0,0,0.16)"/><rect x="27" y="240" width="1057" height="1" fill="rgba(0,0,0,0.16)"/><rect x="27" y="260" width="1057" height="1" fill="rgba(0,0,0,0.16)"/><rect x="27" y="280" width="1057" height="1" fill="rgba(0,0,0,0.16)"/><rect x="27" y="300" width="1057" height="1" fill="rgba(0,0,0,0.16)"/><rect x="27" y="320" width="1057" height="1" fill="rgba(0,0,0,0.16)"/><rect x="27" y="340" width="1057" height="1" fill="rgba(0,0,0,0.16)"/><rect x="27" y="360" width="1057" height="1" fill="rgba(0,0,0,0.16)"/><rect x="27" y="380" width="1057" height="1" fill="rgba(0,0,0,0.16)"/><rect x="27" y="400" width="1057" height="1" fill="rgba(0,0,0,0.16)"/><rect x="27" y="420" width="1057" height="1" fill="rgba(0,0,0,0.16)"/><rect x="27" y="440" width="1057" height="1" fill="rgba(0,0,0,0.16)"/><rect x="27" y="460" width="1057" height="1" fill="rgba(0,0,0,0.16)"/><rect x="27" y="480" width="1057" height="1" fill="rgba(0,0,0,0.16)"/><rect x="27" y="500" width="1057" height="1" fill="rgba(0,0,0,0.16)"/><rect x="27" y="520" width="1057" height="1" fill="rgba(0,0,0,0.16)"/><rect x="89" y="0" width="1" height="20" fill="#bdbdbd"/><rect x="153" y="0" width="1" height="20" fill="#bdbdbd"/><rect x="217" y="0" width="1" height="20" fill="#bdbdbd"/><rect x="281" y="0" width="1" height="20" fill="#bdbdbd"/><rect x="345" y="0" width="1" height="20" fill="#bdbdbd"/><rect x="409" y="0" width="1" height="20" fill="#bdbdbd"/><rect x="473" y="0" width="1" height="20" fill="#bdbdbd"/><rect x="537" y="0" width="1" height="20" fill="#bdbdbd"/><rect x="601" y="0" width="1" height="20" fill="#bdbdbd"/><rect x="665" y="0" width="1" height="20" fill="#bdbdbd"/><rect x="729" y="0" width="1" height="20" fill="#bdbdbd"/><rect x="793" y="0" width="1" height="20" fill="#bdbdbd"/><rect x="857" y="0" width="1" height="20" fill="#bdbdbd"/><rect x="921" y="0" width="1" height="20" fill="#bdbdbd"/><rect x="985" y="0" width="1" height="20" fill="#bdbdbd"/><rect x="1049" y="0" width="1" height="20" fill="#bdbdbd"/><rect x="1113" y="0" width="1" height="20" fill="#bdbdbd"/><rect x="0" y="40" width="26" height="1" fill="#bdbdbd"/><rect x="0" y="60" width="26" height="1" fill="#bdbdbd"/><rect x="0" y="80" width="26" height="1" fill="#bdbdbd"/><rect x="0" y="100" width="26" height="1" fill="#bdbdbd"/><rect x="0" y="120" width="26" height="1" fill="#bdbdbd"/><rect x="0" y="140" width="26" height="1" fill="#bdbdbd"/><rect x="0" y="160" width="26" height="1" fill="#bdbdbd"/><rect x="0" y="180" width="26" height="1" fill="#bdbdbd"/><rect x="0" y="200" width="26" height="1" fill="#bdbdbd"/><rect x="0" y="220" width="26" height="1" fill="#bdbdbd"/><rect x="0" y="240" width="26" height="1" fill="#bdbdbd"/><rect x="0" y="260" width="26" height="1" fill="#bdbdbd"/><rect x="0" y="280" width="26" height="1" fill="#bdbdbd"/><rect x="0" y="300" width="26" height="1" fill="#bdbdbd"/><rect x="0" y="320" width="26" height="1" fill="#bdbdbd"/><rect x="0" y="340" width="26" height="1" fill="#bdbdbd"/><rect x="0" y="360" width="26" height="1" fill="#bdbdbd"/><rect x="0" y="380" width="26" height="1" fill="#bdbdbd"/><rect x="0" y="400" width="26" height="1" fill="#bdbdbd"/><rect x="0" y="420" width="26" height="1" fill="#bdbdbd"/><rect x="0" y="440" width="26" height="1" fill="#bdbdbd"/><rect x="0" y="460" width="26" height="1" fill="#bdbdbd"/><rect x="0" y="480" width="26" height="1" fill="#bdbdbd"/><rect x="0" y="500" width="26" height="1" fill="#bdbdbd"/><rect x="0" y="520" width="26" height="1" fill="#bdbdbd"/><rect x="0" y="20" width="1084" height="1" fill="#a6a6a6"/><rect x="25" y="0" width="1" height="515" fill="#a6a6a6"/><path d="M10 18h12v-10z" fill="#b8b8b8"/></svg>
<div style="position:absolute;left:11px;top:163px;width:1105px;height:1px;background:#d2d2d2;"></div>
<div style="position:absolute;left:64.16px;top:166.24px;font-size:13px;line-height:normal;white-space:nowrap;color:#333;-webkit-text-stroke:0.08px #333;">A</div>
<div style="position:absolute;left:128.16px;top:166.24px;font-size:13px;line-height:normal;white-space:nowrap;color:#333;-webkit-text-stroke:0.08px #333;">B</div>
<div style="position:absolute;left:191.81px;top:166.24px;font-size:13px;line-height:normal;white-space:nowrap;color:#333;-webkit-text-stroke:0.08px #333;">C</div>
<div style="position:absolute;left:255.81px;top:166.24px;font-size:13px;line-height:normal;white-space:nowrap;color:#333;-webkit-text-stroke:0.08px #333;">D</div>
<div style="position:absolute;left:320.16px;top:166.24px;font-size:13px;line-height:normal;white-space:nowrap;color:#333;-webkit-text-stroke:0.08px #333;">E</div>
<div style="position:absolute;left:384.53px;top:166.24px;font-size:13px;line-height:normal;white-space:nowrap;color:#333;-webkit-text-stroke:0.08px #333;">F</div>
<div style="position:absolute;left:447.44px;top:166.24px;font-size:13px;line-height:normal;white-space:nowrap;color:#333;-webkit-text-stroke:0.08px #333;">G</div>
<div style="position:absolute;left:511.81px;top:166.24px;font-size:13px;line-height:normal;white-space:nowrap;color:#333;-webkit-text-stroke:0.08px #333;">H</div>
<div style="position:absolute;left:578.69px;top:166.24px;font-size:13px;line-height:normal;white-space:nowrap;color:#333;-webkit-text-stroke:0.08px #333;">I</div>
<div style="position:absolute;left:641.25px;top:166.24px;font-size:13px;line-height:normal;white-space:nowrap;color:#333;-webkit-text-stroke:0.08px #333;">J</div>
<div style="position:absolute;left:704.16px;top:166.24px;font-size:13px;line-height:normal;white-space:nowrap;color:#333;-webkit-text-stroke:0.08px #333;">K</div>
<div style="position:absolute;left:768.88px;top:166.24px;font-size:13px;line-height:normal;white-space:nowrap;color:#333;-webkit-text-stroke:0.08px #333;">L</div>
<div style="position:absolute;left:831.09px;top:166.24px;font-size:13px;line-height:normal;white-space:nowrap;color:#333;-webkit-text-stroke:0.08px #333;">M</div>
<div style="position:absolute;left:895.81px;top:166.24px;font-size:13px;line-height:normal;white-space:nowrap;color:#333;-webkit-text-stroke:0.08px #333;">N</div>
<div style="position:absolute;left:959.44px;top:166.24px;font-size:13px;line-height:normal;white-space:nowrap;color:#333;-webkit-text-stroke:0.08px #333;">O</div>
<div style="position:absolute;left:1024.16px;top:166.24px;font-size:13px;line-height:normal;white-space:nowrap;color:#333;-webkit-text-stroke:0.08px #333;">P</div>
<div style="position:absolute;left:1087.44px;top:166.24px;font-size:13px;line-height:normal;white-space:nowrap;color:#333;-webkit-text-stroke:0.08px #333;">Q</div>
<div style="position:absolute;left:20.38px;top:186.74px;font-size:13px;line-height:normal;white-space:nowrap;color:#333;-webkit-text-stroke:0.08px #333;">1</div>
<div style="position:absolute;left:20.38px;top:206.74px;font-size:13px;line-height:normal;white-space:nowrap;color:#333;-webkit-text-stroke:0.08px #333;">2</div>
<div style="position:absolute;left:20.38px;top:226.74px;font-size:13px;line-height:normal;white-space:nowrap;color:#333;-webkit-text-stroke:0.08px #333;">3</div>
<div style="position:absolute;left:20.38px;top:246.74px;font-size:13px;line-height:normal;white-space:nowrap;color:#333;-webkit-text-stroke:0.08px #333;">4</div>
<div style="position:absolute;left:20.38px;top:266.74px;font-size:13px;line-height:normal;white-space:nowrap;color:#333;-webkit-text-stroke:0.08px #333;">5</div>
<div style="position:absolute;left:20.38px;top:286.74px;font-size:13px;line-height:normal;white-space:nowrap;color:#333;-webkit-text-stroke:0.08px #333;">6</div>
<div style="position:absolute;left:20.38px;top:306.74px;font-size:13px;line-height:normal;white-space:nowrap;color:#333;-webkit-text-stroke:0.08px #333;">7</div>
<div style="position:absolute;left:20.38px;top:326.74px;font-size:13px;line-height:normal;white-space:nowrap;color:#333;-webkit-text-stroke:0.08px #333;">8</div>
<div style="position:absolute;left:20.38px;top:346.74px;font-size:13px;line-height:normal;white-space:nowrap;color:#333;-webkit-text-stroke:0.08px #333;">9</div>
<div style="position:absolute;left:16.77px;top:366.74px;font-size:13px;line-height:normal;white-space:nowrap;color:#333;-webkit-text-stroke:0.08px #333;">10</div>
<div style="position:absolute;left:17.25px;top:386.74px;font-size:13px;line-height:normal;white-space:nowrap;color:#333;-webkit-text-stroke:0.08px #333;">11</div>
<div style="position:absolute;left:16.77px;top:406.74px;font-size:13px;line-height:normal;white-space:nowrap;color:#333;-webkit-text-stroke:0.08px #333;">12</div>
<div style="position:absolute;left:16.77px;top:426.74px;font-size:13px;line-height:normal;white-space:nowrap;color:#333;-webkit-text-stroke:0.08px #333;">13</div>
<div style="position:absolute;left:16.77px;top:446.74px;font-size:13px;line-height:normal;white-space:nowrap;color:#333;-webkit-text-stroke:0.08px #333;">14</div>
<div style="position:absolute;left:16.77px;top:466.74px;font-size:13px;line-height:normal;white-space:nowrap;color:#333;-webkit-text-stroke:0.08px #333;">15</div>
<div style="position:absolute;left:16.77px;top:486.74px;font-size:13px;line-height:normal;white-space:nowrap;color:#333;-webkit-text-stroke:0.08px #333;">16</div>
<div style="position:absolute;left:16.77px;top:506.74px;font-size:13px;line-height:normal;white-space:nowrap;color:#333;-webkit-text-stroke:0.08px #333;">17</div>
<div style="position:absolute;left:16.77px;top:526.74px;font-size:13px;line-height:normal;white-space:nowrap;color:#333;-webkit-text-stroke:0.08px #333;">18</div>
<div style="position:absolute;left:16.77px;top:546.74px;font-size:13px;line-height:normal;white-space:nowrap;color:#333;-webkit-text-stroke:0.08px #333;">19</div>
<div style="position:absolute;left:16.77px;top:566.74px;font-size:13px;line-height:normal;white-space:nowrap;color:#333;-webkit-text-stroke:0.08px #333;">20</div>
<div style="position:absolute;left:16.77px;top:586.74px;font-size:13px;line-height:normal;white-space:nowrap;color:#333;-webkit-text-stroke:0.08px #333;">21</div>
<div style="position:absolute;left:16.77px;top:606.74px;font-size:13px;line-height:normal;white-space:nowrap;color:#333;-webkit-text-stroke:0.08px #333;">22</div>
<div style="position:absolute;left:16.77px;top:626.74px;font-size:13px;line-height:normal;white-space:nowrap;color:#333;-webkit-text-stroke:0.08px #333;">23</div>
<div style="position:absolute;left:16.77px;top:646.74px;font-size:13px;line-height:normal;white-space:nowrap;color:#333;-webkit-text-stroke:0.08px #333;">24</div>
<div style="position:absolute;left:16.77px;top:666.74px;font-size:13px;line-height:normal;white-space:nowrap;color:#333;-webkit-text-stroke:0.08px #333;">25</div>
<div style="position:absolute;left:39.00px;top:186.94px;font-size:13px;line-height:normal;white-space:nowrap;color:#000;transform:scaleX(1.1167);transform-origin:0 0;-webkit-text-stroke:0.1px #000;">#time</div>
<div style="position:absolute;left:103.00px;top:186.94px;font-size:13px;line-height:normal;white-space:nowrap;color:#000;-webkit-text-stroke:0.1px #000;">x1</div>
<div style="position:absolute;left:167.00px;top:186.94px;font-size:13px;line-height:normal;white-space:nowrap;color:#000;-webkit-text-stroke:0.1px #000;">x2</div>
<div style="position:absolute;left:231.00px;top:186.94px;font-size:13px;line-height:normal;white-space:nowrap;color:#000;-webkit-text-stroke:0.1px #000;">x3</div>
<div style="position:absolute;left:295.00px;top:186.94px;font-size:13px;line-height:normal;white-space:nowrap;color:#000;-webkit-text-stroke:0.1px #000;">x4</div>
<div style="position:absolute;left:90.77px;top:206.94px;font-size:13px;line-height:normal;white-space:nowrap;color:#000;-webkit-text-stroke:0.1px #000;">0</div>
<div style="position:absolute;left:135.98px;top:206.94px;font-size:13px;line-height:normal;white-space:nowrap;color:#000;-webkit-text-stroke:0.1px #000;">-100</div>
<div style="position:absolute;left:178.29px;top:206.94px;font-size:13px;line-height:normal;white-space:nowrap;color:#000;-webkit-text-stroke:0.1px #000;">-100000</div>
<div style="position:absolute;left:282.77px;top:206.94px;font-size:13px;line-height:normal;white-space:nowrap;color:#000;-webkit-text-stroke:0.1px #000;">0</div>
<div style="position:absolute;left:339.54px;top:206.94px;font-size:13px;line-height:normal;white-space:nowrap;color:#000;-webkit-text-stroke:0.1px #000;">10</div>
<div style="position:absolute;left:79.93px;top:226.94px;font-size:13px;line-height:normal;white-space:nowrap;color:#000;-webkit-text-stroke:0.1px #000;">0.1</div>
<div style="position:absolute;left:115.01px;top:226.94px;font-size:13px;line-height:normal;white-space:nowrap;color:#000;-webkit-text-stroke:0.1px #000;">325.988</div>
<div style="position:absolute;left:174.68px;top:226.94px;font-size:13px;line-height:normal;white-space:nowrap;color:#000;-webkit-text-stroke:0.1px #000;">-89967.4</div>
<div style="position:absolute;left:245.91px;top:226.94px;font-size:13px;line-height:normal;white-space:nowrap;color:#000;-webkit-text-stroke:0.1px #000;">-0.0014</div>
<div style="position:absolute;left:307.01px;top:226.94px;font-size:13px;line-height:normal;white-space:nowrap;color:#000;-webkit-text-stroke:0.1px #000;">8.99986</div>
<div style="position:absolute;left:79.93px;top:246.94px;font-size:13px;line-height:normal;white-space:nowrap;color:#000;-webkit-text-stroke:0.1px #000;">0.2</div>
<div style="position:absolute;left:110.68px;top:246.94px;font-size:13px;line-height:normal;white-space:nowrap;color:#000;-webkit-text-stroke:0.1px #000;">-525.994</div>
<div style="position:absolute;left:174.68px;top:246.94px;font-size:13px;line-height:normal;white-space:nowrap;color:#000;-webkit-text-stroke:0.1px #000;">-81023.3</div>
<div style="position:absolute;left:235.78px;top:246.94px;font-size:13px;line-height:normal;white-space:nowrap;color:#000;-webkit-text-stroke:0.1px #000;">0.001246</div>
<div style="position:absolute;left:299.78px;top:246.94px;font-size:13px;line-height:normal;white-space:nowrap;color:#000;-webkit-text-stroke:0.1px #000;">8.099999</div>
<div style="position:absolute;left:79.93px;top:266.94px;font-size:13px;line-height:normal;white-space:nowrap;color:#000;-webkit-text-stroke:0.1px #000;">0.3</div>
<div style="position:absolute;left:108.74px;top:266.94px;font-size:13px;line-height:normal;white-space:nowrap;color:#000;-webkit-text-stroke:0.1px #000;">1177.961</div>
<div style="position:absolute;left:174.68px;top:266.94px;font-size:13px;line-height:normal;white-space:nowrap;color:#000;-webkit-text-stroke:0.1px #000;">-72803.1</div>
<div style="position:absolute;left:238.68px;top:266.94px;font-size:13px;line-height:normal;white-space:nowrap;color:#000;-webkit-text-stroke:0.1px #000;">-0.00422</div>
<div style="position:absolute;left:299.78px;top:266.94px;font-size:13px;line-height:normal;white-space:nowrap;color:#000;-webkit-text-stroke:0.1px #000;">7.289576</div>
<div style="position:absolute;left:79.93px;top:286.94px;font-size:13px;line-height:normal;white-space:nowrap;color:#000;-webkit-text-stroke:0.1px #000;">0.4</div>
<div style="position:absolute;left:110.68px;top:286.94px;font-size:13px;line-height:normal;white-space:nowrap;color:#000;-webkit-text-stroke:0.1px #000;">-2229.96</div>
<div style="position:absolute;left:174.68px;top:286.94px;font-size:13px;line-height:normal;white-space:nowrap;color:#000;-webkit-text-stroke:0.1px #000;">-65745.8</div>
<div style="position:absolute;left:235.78px;top:286.94px;font-size:13px;line-height:normal;white-space:nowrap;color:#000;-webkit-text-stroke:0.1px #000;">0.006529</div>
<div style="position:absolute;left:299.78px;top:286.94px;font-size:13px;line-height:normal;white-space:nowrap;color:#000;-webkit-text-stroke:0.1px #000;">6.561272</div>
<div style="position:absolute;left:79.93px;top:306.94px;font-size:13px;line-height:normal;white-space:nowrap;color:#000;-webkit-text-stroke:0.1px #000;">0.5</div>
<div style="position:absolute;left:107.78px;top:306.94px;font-size:13px;line-height:normal;white-space:nowrap;color:#000;-webkit-text-stroke:0.1px #000;">4585.863</div>
<div style="position:absolute;left:174.68px;top:306.94px;font-size:13px;line-height:normal;white-space:nowrap;color:#000;-webkit-text-stroke:0.1px #000;">-58712.7</div>
<div style="position:absolute;left:245.91px;top:306.94px;font-size:13px;line-height:normal;white-space:nowrap;color:#000;-webkit-text-stroke:0.1px #000;">-0.0152</div>
<div style="position:absolute;left:299.78px;top:306.94px;font-size:13px;line-height:normal;white-space:nowrap;color:#000;-webkit-text-stroke:0.1px #000;">5.903624</div>
<div style="position:absolute;left:79.93px;top:326.94px;font-size:13px;line-height:normal;white-space:nowrap;color:#000;-webkit-text-stroke:0.1px #000;">0.6</div>
<div style="position:absolute;left:110.68px;top:326.94px;font-size:13px;line-height:normal;white-space:nowrap;color:#000;-webkit-text-stroke:0.1px #000;">-9045.82</div>
<div style="position:absolute;left:185.52px;top:326.94px;font-size:13px;line-height:normal;white-space:nowrap;color:#000;-webkit-text-stroke:0.1px #000;">-53746</div>
<div style="position:absolute;left:235.78px;top:326.94px;font-size:13px;line-height:normal;white-space:nowrap;color:#000;-webkit-text-stroke:0.1px #000;">0.028062</div>
<div style="position:absolute;left:299.78px;top:326.94px;font-size:13px;line-height:normal;white-space:nowrap;color:#000;-webkit-text-stroke:0.1px #000;">5.316068</div>
<div style="position:absolute;left:79.93px;top:346.94px;font-size:13px;line-height:normal;white-space:nowrap;color:#000;-webkit-text-stroke:0.1px #000;">0.7</div>
<div style="position:absolute;left:115.01px;top:346.94px;font-size:13px;line-height:normal;white-space:nowrap;color:#000;-webkit-text-stroke:0.1px #000;">18217.5</div>
<div style="position:absolute;left:174.68px;top:346.94px;font-size:13px;line-height:normal;white-space:nowrap;color:#000;-webkit-text-stroke:0.1px #000;">-46549.6</div>
<div style="position:absolute;left:238.68px;top:346.94px;font-size:13px;line-height:normal;white-space:nowrap;color:#000;-webkit-text-stroke:0.1px #000;">-0.05883</div>
<div style="position:absolute;left:299.78px;top:346.94px;font-size:13px;line-height:normal;white-space:nowrap;color:#000;-webkit-text-stroke:0.1px #000;">4.778578</div>
<div style="position:absolute;left:79.93px;top:366.94px;font-size:13px;line-height:normal;white-space:nowrap;color:#000;-webkit-text-stroke:0.1px #000;">0.8</div>
<div style="position:absolute;left:110.68px;top:366.94px;font-size:13px;line-height:normal;white-space:nowrap;color:#000;-webkit-text-stroke:0.1px #000;">-36309.2</div>
<div style="position:absolute;left:174.68px;top:366.94px;font-size:13px;line-height:normal;white-space:nowrap;color:#000;-webkit-text-stroke:0.1px #000;">-45525.6</div>
<div style="position:absolute;left:236.74px;top:366.94px;font-size:13px;line-height:normal;white-space:nowrap;color:#000;-webkit-text-stroke:0.1px #000;">0.114894</div>
<div style="position:absolute;left:307.01px;top:366.94px;font-size:13px;line-height:normal;white-space:nowrap;color:#000;-webkit-text-stroke:0.1px #000;">4.31221</div>
<div style="position:absolute;left:79.93px;top:386.94px;font-size:13px;line-height:normal;white-space:nowrap;color:#000;-webkit-text-stroke:0.1px #000;">0.9</div>
<div style="position:absolute;left:108.74px;top:386.94px;font-size:13px;line-height:normal;white-space:nowrap;color:#000;-webkit-text-stroke:0.1px #000;">72744.11</div>
<div style="position:absolute;left:174.68px;top:386.94px;font-size:13px;line-height:normal;white-space:nowrap;color:#000;-webkit-text-stroke:0.1px #000;">-33698.6</div>
<div style="position:absolute;left:238.68px;top:386.94px;font-size:13px;line-height:normal;white-space:nowrap;color:#000;-webkit-text-stroke:0.1px #000;">-0.23353</div>
<div style="position:absolute;left:299.78px;top:386.94px;font-size:13px;line-height:normal;white-space:nowrap;color:#000;-webkit-text-stroke:0.1px #000;">3.857636</div>
<div style="position:absolute;left:90.77px;top:406.94px;font-size:13px;line-height:normal;white-space:nowrap;color:#000;-webkit-text-stroke:0.1px #000;">1</div>
<div style="position:absolute;left:114.29px;top:406.94px;font-size:13px;line-height:normal;white-space:nowrap;color:#000;-webkit-text-stroke:0.1px #000;">-145363</div>
<div style="position:absolute;left:185.52px;top:406.94px;font-size:13px;line-height:normal;white-space:nowrap;color:#000;-webkit-text-stroke:0.1px #000;">-44865</div>
<div style="position:absolute;left:235.78px;top:406.94px;font-size:13px;line-height:normal;white-space:nowrap;color:#000;-webkit-text-stroke:0.1px #000;">0.464245</div>
<div style="position:absolute;left:299.78px;top:406.94px;font-size:13px;line-height:normal;white-space:nowrap;color:#000;-webkit-text-stroke:0.1px #000;">3.518297</div>
<div style="position:absolute;left:79.93px;top:426.94px;font-size:13px;line-height:normal;white-space:nowrap;color:#000;-webkit-text-stroke:0.1px #000;">1.1</div>
<div style="position:absolute;left:107.78px;top:426.94px;font-size:13px;line-height:normal;white-space:nowrap;color:#000;-webkit-text-stroke:0.1px #000;">290850.8</div>
<div style="position:absolute;left:175.64px;top:426.94px;font-size:13px;line-height:normal;white-space:nowrap;color:#000;-webkit-text-stroke:0.1px #000;">-11293.5</div>
<div style="position:absolute;left:238.68px;top:426.94px;font-size:13px;line-height:normal;white-space:nowrap;color:#000;-webkit-text-stroke:0.1px #000;">-0.93963</div>
<div style="position:absolute;left:299.78px;top:426.94px;font-size:13px;line-height:normal;white-space:nowrap;color:#000;-webkit-text-stroke:0.1px #000;">3.072505</div>
<div style="position:absolute;left:79.93px;top:446.94px;font-size:13px;line-height:normal;white-space:nowrap;color:#000;-webkit-text-stroke:0.1px #000;">1.2</div>
<div style="position:absolute;left:114.29px;top:446.94px;font-size:13px;line-height:normal;white-space:nowrap;color:#000;-webkit-text-stroke:0.1px #000;">-581577</div>
<div style="position:absolute;left:174.68px;top:446.94px;font-size:13px;line-height:normal;white-space:nowrap;color:#000;-webkit-text-stroke:0.1px #000;">-68321.8</div>
<div style="position:absolute;left:235.78px;top:446.94px;font-size:13px;line-height:normal;white-space:nowrap;color:#000;-webkit-text-stroke:0.1px #000;">1.877419</div>
<div style="position:absolute;left:299.78px;top:446.94px;font-size:13px;line-height:normal;white-space:nowrap;color:#000;-webkit-text-stroke:0.1px #000;">2.952996</div>
<div style="position:absolute;left:79.93px;top:466.94px;font-size:13px;line-height:normal;white-space:nowrap;color:#000;-webkit-text-stroke:0.1px #000;">1.3</div>
<div style="position:absolute;left:112.35px;top:466.94px;font-size:13px;line-height:normal;white-space:nowrap;color:#000;-webkit-text-stroke:0.1px #000;">1163278</div>
<div style="position:absolute;left:179.01px;top:466.94px;font-size:13px;line-height:normal;white-space:nowrap;color:#000;-webkit-text-stroke:0.1px #000;">54838.2</div>
<div style="position:absolute;left:238.68px;top:466.94px;font-size:13px;line-height:normal;white-space:nowrap;color:#000;-webkit-text-stroke:0.1px #000;">-3.75255</div>
<div style="position:absolute;left:299.78px;top:466.94px;font-size:13px;line-height:normal;white-space:nowrap;color:#000;-webkit-text-stroke:0.1px #000;">2.282441</div>
<div style="position:absolute;left:79.93px;top:486.94px;font-size:13px;line-height:normal;white-space:nowrap;color:#000;-webkit-text-stroke:0.1px #000;">1.4</div>
<div style="position:absolute;left:107.06px;top:486.94px;font-size:13px;line-height:normal;white-space:nowrap;color:#000;-webkit-text-stroke:0.1px #000;">-2326434</div>
<div style="position:absolute;left:178.29px;top:486.94px;font-size:13px;line-height:normal;white-space:nowrap;color:#000;-webkit-text-stroke:0.1px #000;">-183289</div>
<div style="position:absolute;left:235.78px;top:486.94px;font-size:13px;line-height:normal;white-space:nowrap;color:#000;-webkit-text-stroke:0.1px #000;">7.504423</div>
<div style="position:absolute;left:307.01px;top:486.94px;font-size:13px;line-height:normal;white-space:nowrap;color:#000;-webkit-text-stroke:0.1px #000;">2.80464</div>
<div style="position:absolute;left:79.93px;top:506.94px;font-size:13px;line-height:normal;white-space:nowrap;color:#000;-webkit-text-stroke:0.1px #000;">1.5</div>
<div style="position:absolute;left:111.39px;top:506.94px;font-size:13px;line-height:normal;white-space:nowrap;color:#000;-webkit-text-stroke:0.1px #000;">4652993</div>
<div style="position:absolute;left:171.78px;top:506.94px;font-size:13px;line-height:normal;white-space:nowrap;color:#000;-webkit-text-stroke:0.1px #000;">300339.1</div>
<div style="position:absolute;left:238.68px;top:506.94px;font-size:13px;line-height:normal;white-space:nowrap;color:#000;-webkit-text-stroke:0.1px #000;">-15.0084</div>
<div style="position:absolute;left:299.78px;top:506.94px;font-size:13px;line-height:normal;white-space:nowrap;color:#000;-webkit-text-stroke:0.1px #000;">1.023333</div>
<div style="position:absolute;left:79.93px;top:526.94px;font-size:13px;line-height:normal;white-space:nowrap;color:#000;-webkit-text-stroke:0.1px #000;">1.6</div>
<div style="position:absolute;left:107.06px;top:526.94px;font-size:13px;line-height:normal;white-space:nowrap;color:#000;-webkit-text-stroke:0.1px #000;">-9305917</div>
<div style="position:absolute;left:178.29px;top:526.94px;font-size:13px;line-height:normal;white-space:nowrap;color:#000;-webkit-text-stroke:0.1px #000;">-660287</div>
<div style="position:absolute;left:235.78px;top:526.94px;font-size:13px;line-height:normal;white-space:nowrap;color:#000;-webkit-text-stroke:0.1px #000;">30.01675</div>
<div style="position:absolute;left:299.78px;top:526.94px;font-size:13px;line-height:normal;white-space:nowrap;color:#000;-webkit-text-stroke:0.1px #000;">3.922675</div>
<div style="position:absolute;left:79.93px;top:546.94px;font-size:13px;line-height:normal;white-space:nowrap;color:#000;-webkit-text-stroke:0.1px #000;">1.7</div>
<div style="position:absolute;left:105.12px;top:546.94px;font-size:13px;line-height:normal;white-space:nowrap;color:#000;-webkit-text-stroke:0.1px #000;">18611960</div>
<div style="position:absolute;left:175.39px;top:546.94px;font-size:13px;line-height:normal;white-space:nowrap;color:#000;-webkit-text-stroke:0.1px #000;">1266938</div>
<div style="position:absolute;left:238.68px;top:546.94px;font-size:13px;line-height:normal;white-space:nowrap;color:#000;-webkit-text-stroke:0.1px #000;">-60.0334</div>
<div style="position:absolute;left:302.68px;top:546.94px;font-size:13px;line-height:normal;white-space:nowrap;color:#000;-webkit-text-stroke:0.1px #000;">-2.47293</div>
<div style="position:absolute;left:79.93px;top:566.94px;font-size:13px;line-height:normal;white-space:nowrap;color:#000;-webkit-text-stroke:0.1px #000;">1.8</div>
<div style="position:absolute;left:111.47px;top:566.94px;font-size:13px;line-height:normal;white-space:nowrap;color:#000;transform:scaleX(0.9511);transform-origin:0 0;-webkit-text-stroke:0.1px #000;">-3.7E+07</div>
<div style="position:absolute;left:171.06px;top:566.94px;font-size:13px;line-height:normal;white-space:nowrap;color:#000;-webkit-text-stroke:0.1px #000;">-2582135</div>
<div style="position:absolute;left:235.78px;top:566.94px;font-size:13px;line-height:normal;white-space:nowrap;color:#000;-webkit-text-stroke:0.1px #000;">120.0668</div>
<div style="position:absolute;left:299.78px;top:566.94px;font-size:13px;line-height:normal;white-space:nowrap;color:#000;-webkit-text-stroke:0.1px #000;">9.781036</div>
<div style="position:absolute;left:79.93px;top:586.94px;font-size:13px;line-height:normal;white-space:nowrap;color:#000;-webkit-text-stroke:0.1px #000;">1.9</div>
<div style="position:absolute;left:104.16px;top:586.94px;font-size:13px;line-height:normal;white-space:nowrap;color:#000;-webkit-text-stroke:0.1px #000;">74447721</div>
<div style="position:absolute;left:175.39px;top:586.94px;font-size:13px;line-height:normal;white-space:nowrap;color:#000;-webkit-text-stroke:0.1px #000;">5120850</div>
<div style="position:absolute;left:238.68px;top:586.94px;font-size:13px;line-height:normal;white-space:nowrap;color:#000;-webkit-text-stroke:0.1px #000;">-240.133</div>
<div style="position:absolute;left:302.68px;top:586.94px;font-size:13px;line-height:normal;white-space:nowrap;color:#000;-webkit-text-stroke:0.1px #000;">-15.2104</div>
<div style="position:absolute;left:90.77px;top:606.94px;font-size:13px;line-height:normal;white-space:nowrap;color:#000;-webkit-text-stroke:0.1px #000;">2</div>
<div style="position:absolute;left:111.47px;top:606.94px;font-size:13px;line-height:normal;white-space:nowrap;color:#000;transform:scaleX(0.9511);transform-origin:0 0;-webkit-text-stroke:0.1px #000;">-1.5E+08</div>
<div style="position:absolute;left:186.32px;top:606.94px;font-size:13px;line-height:normal;white-space:nowrap;color:#000;transform:scaleX(0.9385);transform-origin:0 0;-webkit-text-stroke:0.1px #000;">-1E+07</div>
<div style="position:absolute;left:243.01px;top:606.94px;font-size:13px;line-height:normal;white-space:nowrap;color:#000;-webkit-text-stroke:0.1px #000;">480.267</div>
<div style="position:absolute;left:299.78px;top:606.94px;font-size:13px;line-height:normal;white-space:nowrap;color:#000;-webkit-text-stroke:0.1px #000;">34.33732</div>
<div style="position:absolute;left:79.93px;top:626.94px;font-size:13px;line-height:normal;white-space:nowrap;color:#000;-webkit-text-stroke:0.1px #000;">2.1</div>
<div style="position:absolute;left:108.57px;top:626.94px;font-size:13px;line-height:normal;white-space:nowrap;color:#000;transform:scaleX(0.9536);transform-origin:0 0;-webkit-text-stroke:0.1px #000;">2.98E+08</div>
<div style="position:absolute;left:168.16px;top:626.94px;font-size:13px;line-height:normal;white-space:nowrap;color:#000;-webkit-text-stroke:0.1px #000;">20526386</div>
<div style="position:absolute;left:238.68px;top:626.94px;font-size:13px;line-height:normal;white-space:nowrap;color:#000;-webkit-text-stroke:0.1px #000;">-960.534</div>
<div style="position:absolute;left:302.68px;top:626.94px;font-size:13px;line-height:normal;white-space:nowrap;color:#000;-webkit-text-stroke:0.1px #000;">-65.1498</div>
<div style="position:absolute;left:79.93px;top:646.94px;font-size:13px;line-height:normal;white-space:nowrap;color:#000;-webkit-text-stroke:0.1px #000;">2.2</div>
<div style="position:absolute;left:122.32px;top:646.94px;font-size:13px;line-height:normal;white-space:nowrap;color:#000;transform:scaleX(0.9385);transform-origin:0 0;-webkit-text-stroke:0.1px #000;">-6E+08</div>
<div style="position:absolute;left:175.47px;top:646.94px;font-size:13px;line-height:normal;white-space:nowrap;color:#000;transform:scaleX(0.9511);transform-origin:0 0;-webkit-text-stroke:0.1px #000;">-4.1E+07</div>
<div style="position:absolute;left:235.78px;top:646.94px;font-size:13px;line-height:normal;white-space:nowrap;color:#000;-webkit-text-stroke:0.1px #000;">1921.068</div>
<div style="position:absolute;left:307.01px;top:646.94px;font-size:13px;line-height:normal;white-space:nowrap;color:#000;-webkit-text-stroke:0.1px #000;">133.472</div>
<div style="position:absolute;left:79.93px;top:666.94px;font-size:13px;line-height:normal;white-space:nowrap;color:#000;-webkit-text-stroke:0.1px #000;">2.3</div>
<div style="position:absolute;left:108.57px;top:666.94px;font-size:13px;line-height:normal;white-space:nowrap;color:#000;transform:scaleX(0.9536);transform-origin:0 0;-webkit-text-stroke:0.1px #000;">1.19E+09</div>
<div style="position:absolute;left:168.16px;top:666.94px;font-size:13px;line-height:normal;white-space:nowrap;color:#000;-webkit-text-stroke:0.1px #000;">82140338</div>
<div style="position:absolute;left:238.68px;top:666.94px;font-size:13px;line-height:normal;white-space:nowrap;color:#000;-webkit-text-stroke:0.1px #000;">-3842.14</div>
<div style="position:absolute;left:302.68px;top:666.94px;font-size:13px;line-height:normal;white-space:nowrap;color:#000;-webkit-text-stroke:0.1px #000;">-264.089</div>
<div style="position:absolute;left:100px;top:207px;width:2px;height:471px;background:#7b4fbd;"></div>
<div style="position:absolute;left:40px;top:202px;width:57px;height:2px;background:#7b4fbd;"></div>
<div style="position:absolute;left:37px;top:201px;width:2px;height:5px;background:#7b4fbd;"></div>
<div style="position:absolute;left:97px;top:200px;width:7px;height:7px;background:#fff;"></div>
<div style="position:absolute;left:98px;top:201px;width:5px;height:5px;background:#7b4fbd;"></div>
<div style="position:absolute;left:104px;top:203px;width:249px;height:2px;background:#c42030;"></div>
<div style="position:absolute;left:98px;top:184px;width:5px;height:2px;background:#c42030;"></div>
<div style="position:absolute;left:99px;top:187px;width:2px;height:12px;background:#c42030;"></div>
<div style="position:absolute;left:354px;top:184px;width:5px;height:2px;background:#c42030;"></div>
<div style="position:absolute;left:356px;top:187px;width:2px;height:12px;background:#c42030;"></div>
<div style="position:absolute;left:353px;top:200px;width:7px;height:7px;background:#fff;"></div>
<div style="position:absolute;left:354px;top:201px;width:5px;height:5px;background:#c42030;"></div>
<div style="position:absolute;left:356px;top:207px;width:2px;height:471px;background:#2f66c8;"></div>
<div style="position:absolute;left:1095px;top:163px;width:21px;height:515px;background:#e6e6e6;"></div>
<div style="position:absolute;left:1098px;top:166px;width:15px;height:15px;background:#fff;border:1px solid #c6c6c6;"></div>
<svg style="position:absolute;left:1101px;top:171px;" width="9" height="5" viewBox="0 0 9 5"><path d="M0 4.5l4.5-4.5 4.5 4.5z" fill="#666"/></svg>
<div style="position:absolute;left:1098px;top:181px;width:15px;height:276px;background:#fff;border:1px solid #c6c6c6;"></div>
<div style="position:absolute;left:1098px;top:664px;width:15px;height:15px;background:#fff;border:1px solid #c6c6c6;"></div>
<svg style="position:absolute;left:1101px;top:670px;" width="9" height="5" viewBox="0 0 9 5"><path d="M0 0h9l-4.5 4.5z" fill="#666"/></svg>
<div style="position:absolute;left:1094px;top:183px;width:1px;height:495px;background:#b4b4b4;"></div>
<div style="position:absolute;left:11px;top:678px;width:1105px;height:28px;background:#e6e6e6;border-top:1px solid #ababab;"></div>
<svg style="position:absolute;left:37px;top:688px;" width="5" height="8" viewBox="0 0 5 8"><path d="M4.5 0v8l-4.5-4z" fill="#bdbdbd"/></svg>
<svg style="position:absolute;left:66px;top:688px;" width="5" height="8" viewBox="0 0 5 8"><path d="M0 0v8l4.5-4z" fill="#bdbdbd"/></svg>
<div style="position:absolute;left:111px;top:678px;width:77px;height:25px;background:#fff;border-left:1px solid #c6c6c6;border-right:1px solid #c6c6c6;"></div>
<div style="position:absolute;left:111px;top:701px;width:77px;height:2px;background:#217346;"></div>
<div style="position:absolute;left:123.00px;top:684.24px;font-size:13px;line-height:normal;white-space:nowrap;color:#217346;font-weight:bold;transform:scaleX(0.9915);transform-origin:0 0;">atkinson</div>
<svg style="position:absolute;left:221px;top:684px;" width="16" height="16" viewBox="0 0 16 16"><circle cx="8" cy="8" r="7.2" fill="none" stroke="#777" stroke-width="1.2"/><path d="M8 4v8M4 8h8" stroke="#555" stroke-width="1.6"/></svg>
<svg style="position:absolute;left:674px;top:687px;" width="3" height="12" viewBox="0 0 3 12"><rect x="0" y="0" width="2" height="2" fill="#a8a8a8"/><rect x="0" y="4" width="2" height="2" fill="#a8a8a8"/><rect x="0" y="8" width="2" height="2" fill="#a8a8a8"/></svg>
<div style="position:absolute;left:691px;top:685px;width:15px;height:15px;background:#fff;border:1px solid #b4b4b4;"></div>
<svg style="position:absolute;left:696px;top:689px;" width="5" height="8" viewBox="0 0 5 8"><path d="M4.5 0v8l-4.5-4z" fill="#555"/></svg>
<div style="position:absolute;left:705px;top:685px;width:315px;height:15px;background:#fff;border:1px solid #b4b4b4;border-left:2px solid #b4b4b4;"></div>
<div style="position:absolute;left:1020px;top:685px;width:60px;height:15px;background:#dadada;"></div>
<div style="position:absolute;left:1080px;top:685px;width:15px;height:15px;background:#fff;border:1px solid #b4b4b4;"></div>
<svg style="position:absolute;left:1085px;top:689px;" width="5" height="8" viewBox="0 0 5 8"><path d="M0 0v8l4.5-4z" fill="#555"/></svg>
<div style="position:absolute;left:11px;top:706px;width:1105px;height:22px;background:#f1f1f1;border-top:1px solid #d0d0d0;"></div>
<div style="position:absolute;left:18.00px;top:710.69px;font-size:12.5px;line-height:normal;white-space:nowrap;color:#444;transform:scaleX(0.8579);transform-origin:0 0;">Ready</div>
<div style="position:absolute;left:813px;top:707px;width:38px;height:21px;background:#d4d4d4;"></div>
<svg style="position:absolute;left:825px;top:711px;" width="14" height="13" viewBox="0 0 14 13"><g fill="none" stroke="#555" stroke-width="1"><rect x="0.5" y="0.5" width="13" height="12"/><path d="M0.5 4.5h13M0.5 8.5h13M4.5 0.5v12M9 0.5v12"/></g></svg>
<svg style="position:absolute;left:863px;top:711px;" width="14" height="14" viewBox="0 0 14 14"><g fill="none" stroke="#555" stroke-width="1"><rect x="0.5" y="0.5" width="13" height="13"/><rect x="2.5" y="2.5" width="9" height="9"/><path d="M4 5h6M4 7h6M4 9h6"/></g></svg>
<svg style="position:absolute;left:901px;top:711px;" width="14" height="14" viewBox="0 0 14 14"><g fill="none" stroke="#555" stroke-width="1"><rect x="0.5" y="0.5" width="13" height="13"/><path d="M6.5 0.5v8h-6M10.5 0.5v3"/></g></svg>
<div style="position:absolute;left:931px;top:716px;width:7px;height:2px;background:#555;"></div>
<div style="position:absolute;left:942px;top:716px;width:100px;height:1px;background:#a0a0a0;"></div>
<div style="position:absolute;left:990px;top:711px;width:4px;height:11px;background:#666;"></div>
<div style="position:absolute;left:1046px;top:716px;width:9px;height:2px;background:#555;"></div>
<div style="position:absolute;left:1049.5px;top:712px;width:2px;height:9px;background:#555;"></div>
<div style="position:absolute;left:1071.00px;top:709.69px;font-size:12.5px;line-height:normal;white-space:nowrap;color:#444;transform:scaleX(0.8132);transform-origin:0 0;">100%</div>
<div style="position:absolute;left:10px;top:11px;width:1107px;height:718px;border:1px solid #217346;border-top:none;"></div>
<div style="position:absolute;left:371px;top:197px;width:697px;height:464px;background:#fff;"></div>
<svg style="position:absolute;left:371px;top:197px;overflow:hidden" width="697" height="464" viewBox="0 0 697 464"><rect x="62" y="49" width="1" height="371" fill="#d9d9d9"/><rect x="130" y="49" width="1" height="371" fill="#d9d9d9"/><rect x="198" y="49" width="1" height="371" fill="#d9d9d9"/><rect x="266" y="49" width="1" height="371" fill="#d9d9d9"/><rect x="334" y="49" width="1" height="371" fill="#d9d9d9"/><rect x="402" y="49" width="1" height="371" fill="#d9d9d9"/><rect x="470" y="49" width="1" height="371" fill="#d9d9d9"/><rect x="538" y="49" width="1" height="371" fill="#d9d9d9"/><rect x="606" y="49" width="1" height="371" fill="#d9d9d9"/><rect x="674" y="49" width="1" height="371" fill="#d9d9d9"/><rect x="62" y="49" width="613" height="1" fill="#d9d9d9"/><rect x="62" y="111" width="613" height="1" fill="#d9d9d9"/><rect x="62" y="172" width="613" height="1" fill="#d9d9d9"/><rect x="62" y="234" width="613" height="1" fill="#d9d9d9"/><rect x="62" y="296" width="613" height="1" fill="#d9d9d9"/><rect x="62" y="357" width="613" height="1" fill="#d9d9d9"/><rect x="62" y="419" width="613" height="1" fill="#d9d9d9"/><path d="M62.80 172.93 C65.07 172.93 71.87 172.93 76.40 172.93 C80.93 172.93 85.47 172.93 90.00 172.93 C94.53 172.93 99.07 172.93 103.60 172.93 C108.13 172.93 112.67 172.93 117.20 172.93 C121.73 172.93 126.27 172.93 130.80 172.93 C135.33 172.93 139.87 172.93 144.40 172.93 C148.93 172.93 153.47 172.93 158.00 172.93 C162.53 172.93 167.07 172.93 171.60 172.93 C176.13 172.93 180.67 172.93 185.20 172.93 C189.73 172.93 194.27 172.93 198.80 172.93 C203.33 172.93 207.87 172.93 212.40 172.93 C216.93 172.93 221.47 172.93 226.00 172.93 C230.53 172.93 235.07 172.93 239.60 172.93 C244.13 172.93 248.67 172.93 253.20 172.93 C257.73 172.93 262.27 172.93 266.80 172.93 C271.33 172.93 275.87 172.93 280.40 172.93 C284.93 172.93 289.47 172.93 294.00 172.93 C298.53 172.93 303.07 172.93 307.60 172.93 C312.13 172.93 316.67 172.93 321.20 172.93 C325.73 172.93 330.27 172.93 334.80 172.93 C339.33 172.93 343.87 172.93 348.40 172.93 C352.93 172.93 357.47 172.93 362.00 172.93 C366.53 172.93 371.07 172.93 375.60 172.93 C380.13 172.93 384.67 172.94 389.20 172.94 C393.73 172.94 398.27 172.93 402.80 172.93 C407.33 172.93 411.87 172.95 416.40 172.95 C420.93 172.94 425.47 172.90 430.00 172.91 C434.53 172.92 439.07 172.99 443.60 172.98 C448.13 172.97 452.67 172.82 457.20 172.84 C461.73 172.86 466.27 173.17 470.80 173.12 C475.33 173.07 479.87 172.46 484.40 172.56 C488.93 172.65 493.47 173.87 498.00 173.69 C502.53 173.50 507.07 171.05 511.60 171.43 C516.13 171.81 520.67 176.69 525.20 175.94 C529.73 175.19 534.27 165.41 538.80 166.92 C543.33 168.42 547.87 187.98 552.40 184.97 C556.93 181.96 561.47 142.85 566.00 148.86 C570.53 154.88 575.07 233.11 579.60 221.07 C584.13 209.04 588.67 52.58 593.20 76.65 C597.73 100.72 604.53 317.35 606.80 365.49" fill="none" stroke="#5b9bd5" stroke-width="2.25" stroke-linejoin="round" stroke-linecap="round"/><path d="M62.80 172.93 C65.07 172.93 71.87 172.93 76.40 172.93 C80.93 172.93 85.47 172.93 90.00 172.93 C94.53 172.93 99.07 172.93 103.60 172.93 C108.13 172.93 112.67 172.93 117.20 172.93 C121.73 172.93 126.27 172.93 130.80 172.93 C135.33 172.93 139.87 172.93 144.40 172.93 C148.93 172.93 153.47 172.93 158.00 172.93 C162.53 172.93 167.07 172.93 171.60 172.93 C176.13 172.93 180.67 172.93 185.20 172.93 C189.73 172.93 194.27 172.93 198.80 172.93 C203.33 172.93 207.87 172.93 212.40 172.93 C216.93 172.93 221.47 172.93 226.00 172.93 C230.53 172.93 235.07 172.93 239.60 172.93 C244.13 172.93 248.67 172.93 253.20 172.93 C257.73 172.93 262.27 172.93 266.80 172.93 C271.33 172.93 275.87 172.93 280.40 172.93 C284.93 172.93 289.47 172.93 294.00 172.93 C298.53 172.93 303.07 172.93 307.60 172.93 C312.13 172.93 316.67 172.93 321.20 172.93 C325.73 172.93 330.27 172.93 334.80 172.93 C339.33 172.93 343.87 172.93 348.40 172.93 C352.93 172.93 357.47 172.93 362.00 172.93 C366.53 172.93 371.07 172.93 375.60 172.93 C380.13 172.93 384.67 172.93 389.20 172.93 C393.73 172.93 398.27 172.93 402.80 172.93 C407.33 172.93 411.87 172.93 416.40 172.93 C420.93 172.93 425.47 172.93 430.00 172.93 C434.53 172.93 439.07 172.94 443.60 172.94 C448.13 172.94 452.67 172.93 457.20 172.93 C461.73 172.93 466.27 172.95 470.80 172.95 C475.33 172.94 479.87 172.90 484.40 172.91 C488.93 172.91 493.47 173.00 498.00 172.99 C502.53 172.97 507.07 172.80 511.60 172.83 C516.13 172.86 520.67 173.19 525.20 173.14 C529.73 173.09 534.27 172.41 538.80 172.52 C543.33 172.62 547.87 173.97 552.40 173.76 C556.93 173.56 561.47 170.86 566.00 171.27 C570.53 171.69 575.07 177.08 579.60 176.25 C584.13 175.42 588.67 164.63 593.20 166.29 C597.73 167.95 604.53 182.89 606.80 186.21" fill="none" stroke="#ed7d31" stroke-width="2.25" stroke-linejoin="round" stroke-linecap="round"/><path d="M62.80 172.93 C65.07 172.93 71.87 172.93 76.40 172.93 C80.93 172.93 85.47 172.93 90.00 172.93 C94.53 172.93 99.07 172.93 103.60 172.93 C108.13 172.93 112.67 172.93 117.20 172.93 C121.73 172.93 126.27 172.93 130.80 172.93 C135.33 172.93 139.87 172.93 144.40 172.93 C148.93 172.93 153.47 172.93 158.00 172.93 C162.53 172.93 167.07 172.93 171.60 172.93 C176.13 172.93 180.67 172.93 185.20 172.93 C189.73 172.93 194.27 172.93 198.80 172.93 C203.33 172.93 207.87 172.93 212.40 172.93 C216.93 172.93 221.47 172.93 226.00 172.93 C230.53 172.93 235.07 172.93 239.60 172.93 C244.13 172.93 248.67 172.93 253.20 172.93 C257.73 172.93 262.27 172.93 266.80 172.93 C271.33 172.93 275.87 172.93 280.40 172.93 C284.93 172.93 289.47 172.93 294.00 172.93 C298.53 172.93 303.07 172.93 307.60 172.93 C312.13 172.93 316.67 172.93 321.20 172.93 C325.73 172.93 330.27 172.93 334.80 172.93 C339.33 172.93 343.87 172.93 348.40 172.93 C352.93 172.93 357.47 172.93 362.00 172.93 C366.53 172.93 371.07 172.93 375.60 172.93 C380.13 172.93 384.67 172.93 389.20 172.93 C393.73 172.93 398.27 172.93 402.80 172.93 C407.33 172.93 411.87 172.93 416.40 172.93 C420.93 172.93 425.47 172.93 430.00 172.93 C434.53 172.93 439.07 172.93 443.60 172.93 C448.13 172.93 452.67 172.93 457.20 172.93 C461.73 172.93 466.27 172.93 470.80 172.93 C475.33 172.93 479.87 172.93 484.40 172.93 C488.93 172.93 493.47 172.93 498.00 172.93 C502.53 172.93 507.07 172.93 511.60 172.93 C516.13 172.93 520.67 172.93 525.20 172.93 C529.73 172.93 534.27 172.93 538.80 172.93 C543.33 172.93 547.87 172.93 552.40 172.93 C556.93 172.93 561.47 172.93 566.00 172.93 C570.53 172.93 575.07 172.93 579.60 172.93 C584.13 172.93 588.67 172.93 593.20 172.93 C597.73 172.93 604.53 172.93 606.80 172.93" fill="none" stroke="#a5a5a5" stroke-width="2.25" stroke-linejoin="round" stroke-linecap="round"/><path d="M62.80 172.93 C65.07 172.93 71.87 172.93 76.40 172.93 C80.93 172.93 85.47 172.93 90.00 172.93 C94.53 172.93 99.07 172.93 103.60 172.93 C108.13 172.93 112.67 172.93 117.20 172.93 C121.73 172.93 126.27 172.93 130.80 172.93 C135.33 172.93 139.87 172.93 144.40 172.93 C148.93 172.93 153.47 172.93 158.00 172.93 C162.53 172.93 167.07 172.93 171.60 172.93 C176.13 172.93 180.67 172.93 185.20 172.93 C189.73 172.93 194.27 172.93 198.80 172.93 C203.33 172.93 207.87 172.93 212.40 172.93 C216.93 172.93 221.47 172.93 226.00 172.93 C230.53 172.93 235.07 172.93 239.60 172.93 C244.13 172.93 248.67 172.93 253.20 172.93 C257.73 172.93 262.27 172.93 266.80 172.93 C271.33 172.93 275.87 172.93 280.40 172.93 C284.93 172.93 289.47 172.93 294.00 172.93 C298.53 172.93 303.07 172.93 307.60 172.93 C312.13 172.93 316.67 172.93 321.20 172.93 C325.73 172.93 330.27 172.93 334.80 172.93 C339.33 172.93 343.87 172.93 348.40 172.93 C352.93 172.93 357.47 172.93 362.00 172.93 C366.53 172.93 371.07 172.93 375.60 172.93 C380.13 172.93 384.67 172.93 389.20 172.93 C393.73 172.93 398.27 172.93 402.80 172.93 C407.33 172.93 411.87 172.93 416.40 172.93 C420.93 172.93 425.47 172.93 430.00 172.93 C434.53 172.93 439.07 172.93 443.60 172.93 C448.13 172.93 452.67 172.93 457.20 172.93 C461.73 172.93 466.27 172.93 470.80 172.93 C475.33 172.93 479.87 172.93 484.40 172.93 C488.93 172.93 493.47 172.93 498.00 172.93 C502.53 172.93 507.07 172.93 511.60 172.93 C516.13 172.93 520.67 172.93 525.20 172.93 C529.73 172.93 534.27 172.93 538.80 172.93 C543.33 172.93 547.87 172.93 552.40 172.93 C556.93 172.93 561.47 172.93 566.00 172.93 C570.53 172.93 575.07 172.93 579.60 172.93 C584.13 172.93 588.67 172.93 593.20 172.93 C597.73 172.93 604.53 172.93 606.80 172.93" fill="none" stroke="#ffc000" stroke-width="2.25" stroke-linejoin="round" stroke-linecap="round"/></svg>
<div style="position:absolute;left:658.00px;top:208.26px;font-size:18.5px;line-height:normal;white-space:nowrap;color:#595959;transform:scaleX(0.9095);transform-origin:0 0;">Atkinson system</div>
<div style="position:absolute;left:392.50px;top:238.79px;font-size:11.5px;line-height:normal;white-space:nowrap;color:#595959;transform:scaleX(0.8786);transform-origin:0 0;">1E+14</div>
<div style="position:absolute;left:392.50px;top:300.46px;font-size:11.5px;line-height:normal;white-space:nowrap;color:#595959;transform:scaleX(0.8786);transform-origin:0 0;">5E+13</div>
<div style="position:absolute;left:416.00px;top:362.13px;font-size:11.5px;line-height:normal;white-space:nowrap;color:#595959;transform:scaleX(0.9381);transform-origin:0 0;">0</div>
<div style="position:absolute;left:388.00px;top:423.79px;font-size:11.5px;line-height:normal;white-space:nowrap;color:#595959;transform:scaleX(0.9090);transform-origin:0 0;">-5E+13</div>
<div style="position:absolute;left:388.00px;top:485.46px;font-size:11.5px;line-height:normal;white-space:nowrap;color:#595959;transform:scaleX(0.9090);transform-origin:0 0;">-1E+14</div>
<div style="position:absolute;left:379.00px;top:547.13px;font-size:11.5px;line-height:normal;white-space:nowrap;color:#595959;transform:scaleX(0.9150);transform-origin:0 0;">-1.5E+14</div>
<div style="position:absolute;left:388.00px;top:608.79px;font-size:11.5px;line-height:normal;white-space:nowrap;color:#595959;transform:scaleX(0.9090);transform-origin:0 0;">-2E+14</div>
<div style="position:absolute;left:430.60px;top:379.13px;font-size:11.5px;line-height:normal;white-space:nowrap;color:#595959;">0</div>
<div style="position:absolute;left:493.81px;top:379.13px;font-size:11.5px;line-height:normal;white-space:nowrap;color:#595959;">0.5</div>
<div style="position:absolute;left:566.60px;top:379.13px;font-size:11.5px;line-height:normal;white-space:nowrap;color:#595959;">1</div>
<div style="position:absolute;left:629.81px;top:379.13px;font-size:11.5px;line-height:normal;white-space:nowrap;color:#595959;">1.5</div>
<div style="position:absolute;left:702.60px;top:379.13px;font-size:11.5px;line-height:normal;white-space:nowrap;color:#595959;">2</div>
<div style="position:absolute;left:765.81px;top:379.13px;font-size:11.5px;line-height:normal;white-space:nowrap;color:#595959;">2.5</div>
<div style="position:absolute;left:838.60px;top:379.13px;font-size:11.5px;line-height:normal;white-space:nowrap;color:#595959;">3</div>
<div style="position:absolute;left:901.81px;top:379.13px;font-size:11.5px;line-height:normal;white-space:nowrap;color:#595959;">3.5</div>
<div style="position:absolute;left:974.60px;top:379.13px;font-size:11.5px;line-height:normal;white-space:nowrap;color:#595959;">4</div>
<div style="position:absolute;left:1037.81px;top:379.13px;font-size:11.5px;line-height:normal;white-space:nowrap;color:#595959;">4.5</div>
<div style="position:absolute;left:626px;top:642px;width:26px;height:2px;background:#5b9bd5;"></div>
<div style="position:absolute;left:655.00px;top:636.59px;font-size:11.5px;line-height:normal;white-space:nowrap;color:#595959;transform:scaleX(0.9056);transform-origin:0 0;">x1</div>
<div style="position:absolute;left:676px;top:642px;width:26px;height:2px;background:#ed7d31;"></div>
<div style="position:absolute;left:705.00px;top:636.59px;font-size:11.5px;line-height:normal;white-space:nowrap;color:#595959;transform:scaleX(0.9056);transform-origin:0 0;">x2</div>
<div style="position:absolute;left:726px;top:642px;width:26px;height:2px;background:#a5a5a5;"></div>
<div style="position:absolute;left:755.00px;top:636.59px;font-size:11.5px;line-height:normal;white-space:nowrap;color:#595959;transform:scaleX(0.9056);transform-origin:0 0;">x3</div>
<div style="position:absolute;left:776px;top:642px;width:26px;height:2px;background:#ffc000;"></div>
<div style="position:absolute;left:805.00px;top:636.59px;font-size:11.5px;line-height:normal;white-space:nowrap;color:#595959;transform:scaleX(0.9056);transform-origin:0 0;">x4</div>
<div style="position:absolute;left:371px;top:197px;width:698px;height:465px;border:1.5px solid #9a9a9a;"></div>
<svg style="position:absolute;left:363px;top:189px;" width="713" height="480" viewBox="0 0 713 480"><circle cx="8" cy="8" r="4.5" fill="#fff" stroke="#8c8c8c" stroke-width="1.6"/><circle cx="357.0" cy="8" r="4.5" fill="#fff" stroke="#8c8c8c" stroke-width="1.6"/><circle cx="705" cy="8" r="4.5" fill="#fff" stroke="#8c8c8c" stroke-width="1.6"/><circle cx="8" cy="240.5" r="4.5" fill="#fff" stroke="#8c8c8c" stroke-width="1.6"/><circle cx="705" cy="240.5" r="4.5" fill="#fff" stroke="#8c8c8c" stroke-width="1.6"/><circle cx="8" cy="472" r="4.5" fill="#fff" stroke="#8c8c8c" stroke-width="1.6"/><circle cx="357.0" cy="472" r="4.5" fill="#fff" stroke="#8c8c8c" stroke-width="1.6"/><circle cx="705" cy="472" r="4.5" fill="#fff" stroke="#8c8c8c" stroke-width="1.6"/></svg>
<svg style="position:absolute;left:552.5px;top:52.5px;" width="50" height="14" viewBox="0 0 50 14"><path transform="translate(0.00 0) scale(0.95)" d="M0.5 1H11.5M6.3 1L5.3 3M2 3V11.8M2 3H10V11.8M2 7.2H10M2 11.3H10" fill="none" stroke="#fff" stroke-width="1.11"/><path transform="translate(12.00 0) scale(0.95)" d="M6 0L6.6 1.6M1.5 2H11.5M1.8 2V7Q1.8 10 0.5 11.8M3 4.6H11M5 3V7.2M8.6 3V7.2M5 7H8.6M4 8.2H9.6Q8 11 3.2 11.8M5.2 9.2Q7.5 11.2 11.3 11.8" fill="none" stroke="#fff" stroke-width="1.11"/><path transform="translate(24.00 0) scale(0.95)" d="M1.5 11.8V1H10.5V10.6Q10.5 11.6 9.2 11.6M3 4L5.4 9.2M5.6 3.6L3 9.8M6.5 4L9 9.2M9 3.6L6.5 9.8" fill="none" stroke="#fff" stroke-width="1.11"/><path transform="translate(36.00 0) scale(0.95)" d="M4.2 0.3L3.2 2M2.5 2H9.2V7.4M2.5 2V6Q2.5 7.5 1.5 8M1 4.6H11.2M5 2.8L6 3.8M5.4 5.4L6.4 6.4M1.6 8.6H10.4M2 8.6V11.4M4.6 8.6V11.4M7.4 8.6V11.4M10 8.6V11.4M0.5 11.5H11.5" fill="none" stroke="#fff" stroke-width="1.11"/></svg>
<svg style="position:absolute;left:1017px;top:113.5px;" width="38" height="14" viewBox="0 0 38 14"><path transform="translate(0.00 0) scale(0.95)" d="M3.6 0.3L1 5.5M2.6 3.4V12M5 1H10.5V5H5ZM4.5 7H11.5M8 5V12M8 7.2L4.5 11M8 7.2L11.5 11" fill="none" stroke="#3a3a3a" stroke-width="1.05"/><path transform="translate(12.00 0) scale(0.95)" d="M0.5 2.6H11.5M5.2 0.3L2 6.3M2.8 5V12M5 5H10L7.6 7M7.6 7V11.3Q7.6 12 6.5 11.8M4.5 8.6H11.5" fill="none" stroke="#3a3a3a" stroke-width="1.05"/><path transform="translate(24.00 0) scale(0.95)" d="M0.5 1H7M3.6 1L1.5 4.6H6.6M5 3L6.6 5M1 7.6H6.6M3.8 5.6V11M0.5 11.2H7M8.6 2V9M11 0.4V10.8Q11 11.8 10 11.7" fill="none" stroke="#3a3a3a" stroke-width="1.05"/></svg>
<svg style="position:absolute;left:1012px;top:129.5px;" width="50" height="14" viewBox="0 0 50 14"><path transform="translate(0.00 0) scale(0.95)" d="M0.5 1H11.5M6.3 1L5.3 3M2 3V11.8M2 3H10V11.8M2 7.2H10M2 11.3H10" fill="none" stroke="#3a3a3a" stroke-width="1.05"/><path transform="translate(12.00 0) scale(0.95)" d="M6 0L6.6 1.6M1.5 2H11.5M1.8 2V7Q1.8 10 0.5 11.8M3 4.6H11M5 3V7.2M8.6 3V7.2M5 7H8.6M4 8.2H9.6Q8 11 3.2 11.8M5.2 9.2Q7.5 11.2 11.3 11.8" fill="none" stroke="#3a3a3a" stroke-width="1.05"/><path transform="translate(24.00 0) scale(0.95)" d="M1.5 11.8V1H10.5V10.6Q10.5 11.6 9.2 11.6M3 4L5.4 9.2M5.6 3.6L3 9.8M6.5 4L9 9.2M9 3.6L6.5 9.8" fill="none" stroke="#3a3a3a" stroke-width="1.05"/><path transform="translate(36.00 0) scale(0.95)" d="M4.2 0.3L3.2 2M2.5 2H9.2V7.4M2.5 2V6Q2.5 7.5 1.5 8M1 4.6H11.2M5 2.8L6 3.8M5.4 5.4L6.4 6.4M1.6 8.6H10.4M2 8.6V11.4M4.6 8.6V11.4M7.4 8.6V11.4M10 8.6V11.4M0.5 11.5H11.5" fill="none" stroke="#3a3a3a" stroke-width="1.05"/></svg>
<svg style="position:absolute;left:1024px;top:149.5px;" width="25" height="14" viewBox="0 0 25 14"><path transform="translate(0.00 0) scale(0.92)" d="M3.6 0.3L1 5.5M2.6 3.4V12M5 1H10.5V5H5ZM4.5 7H11.5M8 5V12M8 7.2L4.5 11M8 7.2L11.5 11" fill="none" stroke="#666" stroke-width="1.09"/><path transform="translate(11.50 0) scale(0.92)" d="M0.5 2.6H11.5M5.2 0.3L2 6.3M2.8 5V12M5 5H10L7.6 7M7.6 7V11.3Q7.6 12 6.5 11.8M4.5 8.6H11.5" fill="none" stroke="#666" stroke-width="1.09"/></svg>
</body></html>
